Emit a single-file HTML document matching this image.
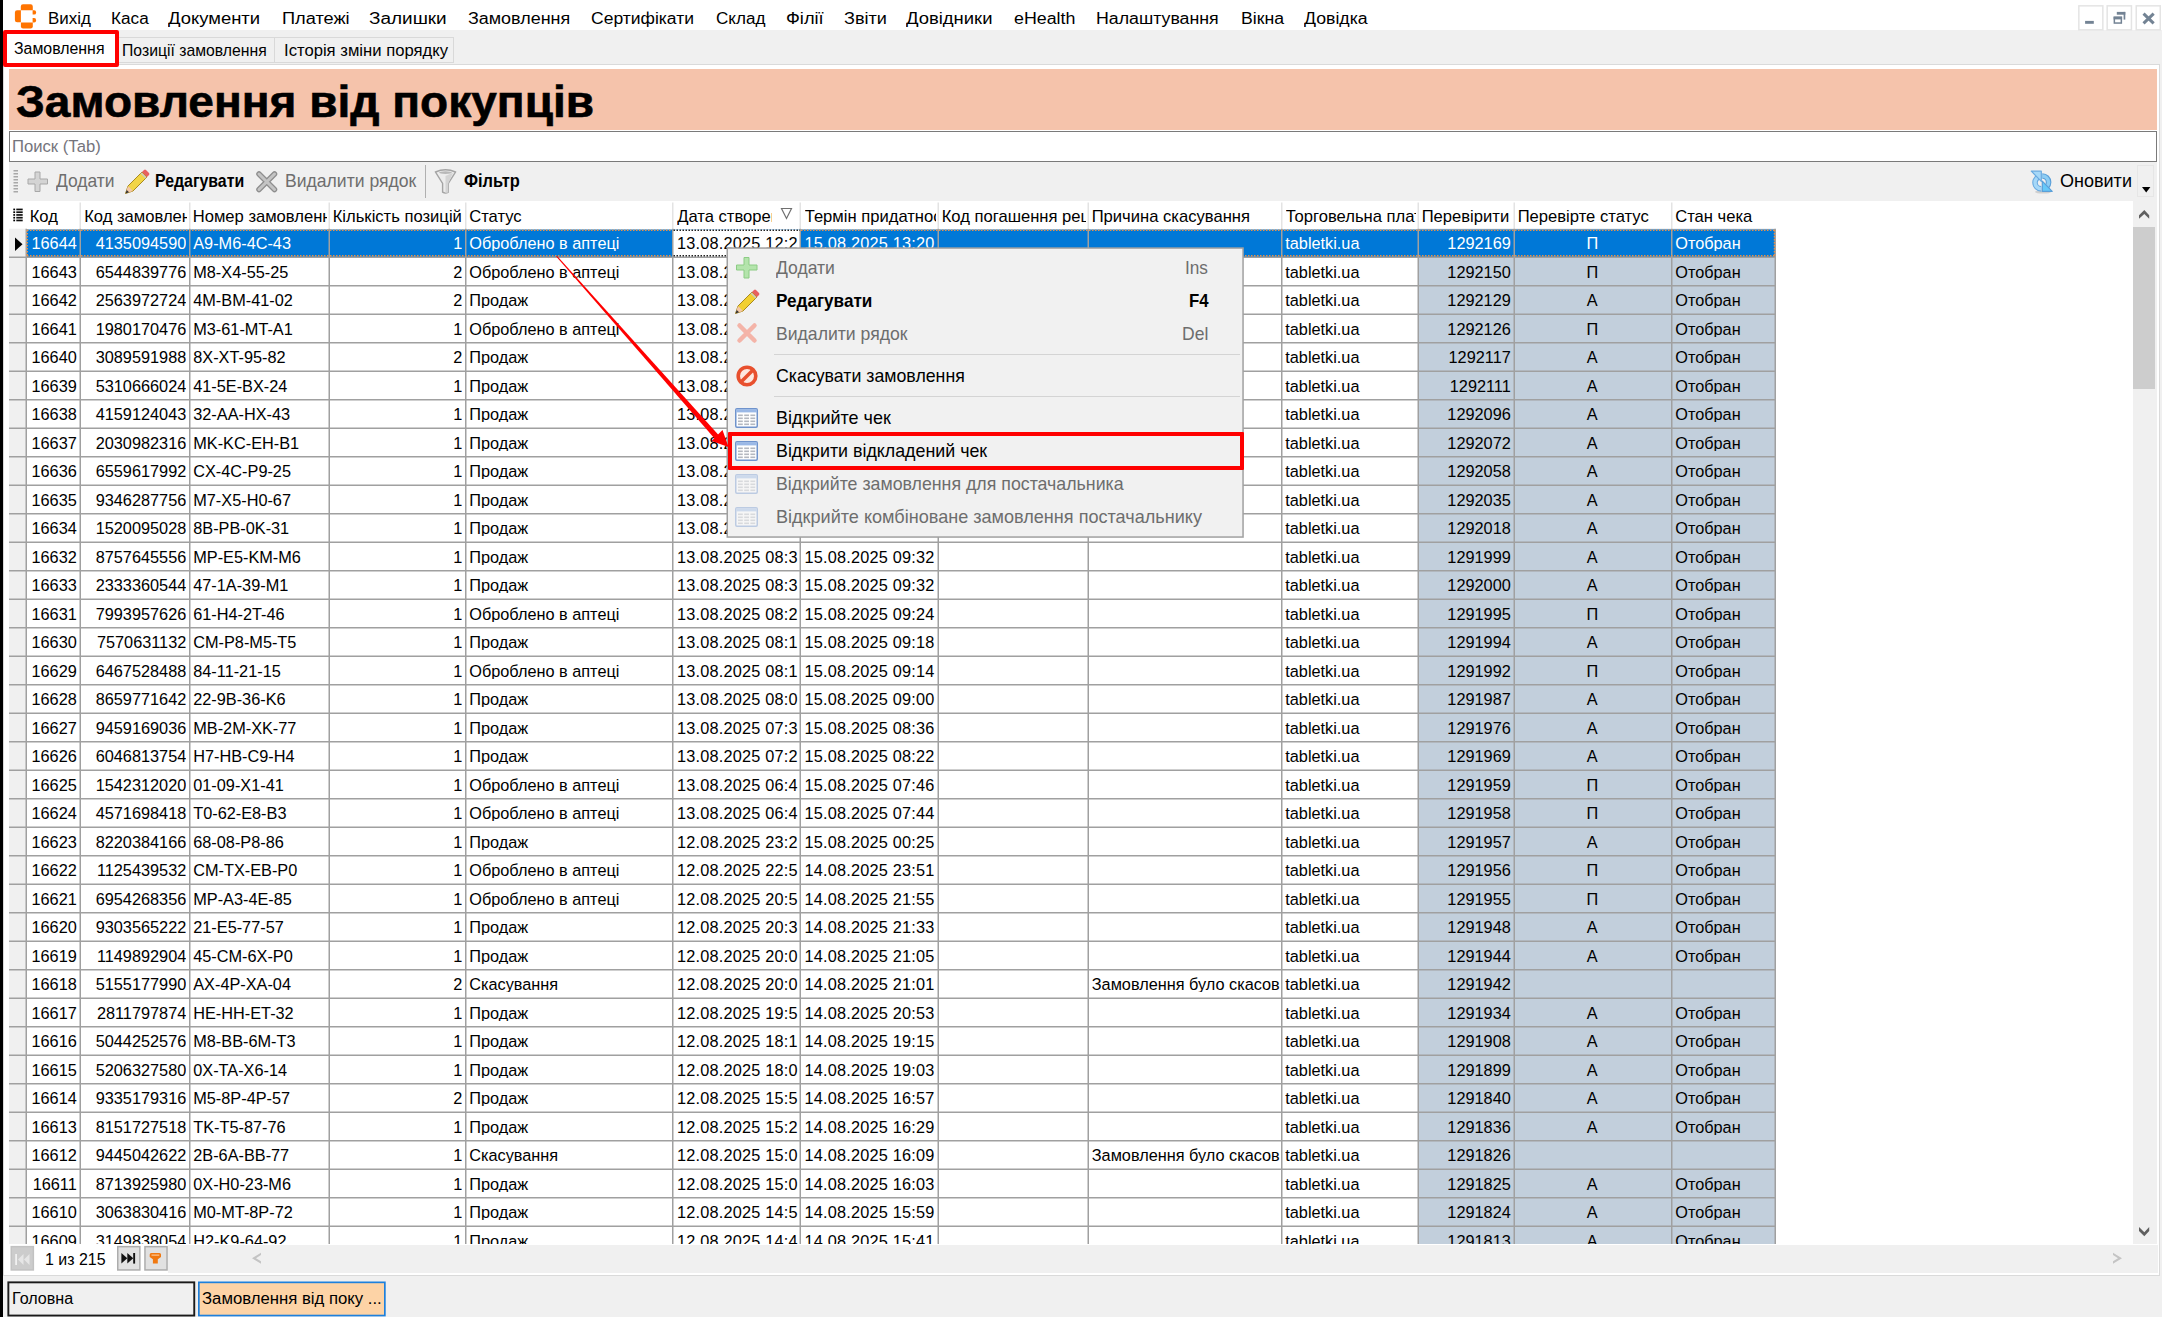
<!DOCTYPE html><html><head><meta charset="utf-8"><title>Замовлення від покупців</title><style>
*{margin:0;padding:0;box-sizing:border-box}
html,body{width:2162px;height:1317px;overflow:hidden;background:#f0f0f0;font-family:"Liberation Sans",sans-serif}
.t{position:absolute;line-height:1;white-space:nowrap}
.b{position:absolute}
svg{position:absolute;overflow:visible}
</style></head><body>
<div class="b" style="left:0px;top:0px;width:3px;height:1317px;background:#000"></div>
<div class="b" style="left:3px;top:0px;width:2159px;height:30px;background:#fff"></div>
<svg style="left:14px;top:4px" width="24" height="26" viewBox="0 0 24 26"><path d="M9 0.2h7.6a2.2 2.2 0 0 1 2.2 2.2v3.9h-12v-3.9a2.2 2.2 0 0 1 2.2-2.2z" fill="#ff7400"/><path d="M3.1 6.2h3.8v12h-3.8a2.2 2.2 0 0 1-2.2-2.2v-7.6a2.2 2.2 0 0 1 2.2-2.2z" fill="#ff7400"/><path d="M6.9 18.6h11.9v3.7a2.2 2.2 0 0 1-2.2 2.2h-7.5a2.2 2.2 0 0 1-2.2-2.2z" fill="#ff7400"/><path d="M18.6 6.2h1.6a1.9 1.9 0 0 1 1.9 1.9v0.6a1.9 1.9 0 0 1-1.9 1.9h-1.6z" fill="#ff7400"/><path d="M18.6 14h1.6a1.9 1.9 0 0 1 1.9 1.9v0.6a1.9 1.9 0 0 1-1.9 1.9h-1.6z" fill="#ff7400"/></svg>
<div class="t" style="left:47.6px;top:9.76px;font-size:17.3px;color:#000;transform:scaleX(0.9799);transform-origin:0 0;">Вихід</div>
<div class="t" style="left:110.69999999999999px;top:9.76px;font-size:17.3px;color:#000;transform:scaleX(0.9934);transform-origin:0 0;">Каса</div>
<div class="t" style="left:168.4px;top:9.76px;font-size:17.3px;color:#000;transform:scaleX(1.0667);transform-origin:0 0;">Документи</div>
<div class="t" style="left:281.6px;top:9.76px;font-size:17.3px;color:#000;transform:scaleX(1.0527);transform-origin:0 0;">Платежі</div>
<div class="t" style="left:369.1px;top:9.76px;font-size:17.3px;color:#000;transform:scaleX(1.0966);transform-origin:0 0;">Залишки</div>
<div class="t" style="left:467.6px;top:9.76px;font-size:17.3px;color:#000;transform:scaleX(1.0373);transform-origin:0 0;">Замовлення</div>
<div class="t" style="left:590.6px;top:9.76px;font-size:17.3px;color:#000;transform:scaleX(1.0130);transform-origin:0 0;">Сертифікати</div>
<div class="t" style="left:715.5px;top:9.76px;font-size:17.3px;color:#000;transform:scaleX(0.9873);transform-origin:0 0;">Склад</div>
<div class="t" style="left:785.8000000000001px;top:9.76px;font-size:17.3px;color:#000;transform:scaleX(1.0551);transform-origin:0 0;">Філії</div>
<div class="t" style="left:843.5px;top:9.76px;font-size:17.3px;color:#000;transform:scaleX(1.0470);transform-origin:0 0;">Звіти</div>
<div class="t" style="left:906.4px;top:9.76px;font-size:17.3px;color:#000;transform:scaleX(1.0673);transform-origin:0 0;">Довідники</div>
<div class="t" style="left:1013.7px;top:9.76px;font-size:17.3px;color:#000;transform:scaleX(1.0312);transform-origin:0 0;">eHealth</div>
<div class="t" style="left:1096.1px;top:9.76px;font-size:17.3px;color:#000;transform:scaleX(1.0275);transform-origin:0 0;">Налаштування</div>
<div class="t" style="left:1240.6px;top:9.76px;font-size:17.3px;color:#000;transform:scaleX(1.0222);transform-origin:0 0;">Вікна</div>
<div class="t" style="left:1304.1px;top:9.76px;font-size:17.3px;color:#000;transform:scaleX(1.0234);transform-origin:0 0;">Довідка</div>
<svg style="left:0;top:0" width="2162" height="40"><rect x="2078.85" y="5.85" width="24.0" height="24" fill="#fff" stroke="#e4e4e4" stroke-width="1.5"/><rect x="2107.15" y="5.85" width="24.299999999999727" height="24" fill="#fff" stroke="#e4e4e4" stroke-width="1.5"/><rect x="2136.25" y="5.85" width="24.0" height="24" fill="#fff" stroke="#e4e4e4" stroke-width="1.5"/><rect x="2085.1" y="20.9" width="8.7" height="2.9" fill="#738394"/><rect x="2114.35" y="17.35" width="7" height="5.7" fill="none" stroke="#738394" stroke-width="1.5"/><rect x="2113.6" y="16.6" width="8.5" height="2.8" fill="#738394"/><rect x="2116.8" y="11.9" width="8.5" height="2.8" fill="#738394"/><rect x="2123.6" y="11.9" width="1.7" height="7.7" fill="#738394"/><path d="M2144.6 14.6L2152.6 22.4M2152.6 14.6L2144.6 22.4" stroke="#738394" stroke-width="3" stroke-linecap="square"/></svg>
<div class="b" style="left:3px;top:64px;width:2157px;height:1212px;background:#fff;border:1px solid #dadada"></div>
<div class="b" style="left:118px;top:37px;width:157px;height:26px;background:#f0f0f0;border:1px solid #d9d9d9"></div>
<div class="b" style="left:274px;top:37px;width:180px;height:26px;background:#f0f0f0;border:1px solid #d9d9d9"></div>
<div class="b" style="left:7px;top:33px;width:109px;height:31px;background:#fff"></div>
<div class="t" style="left:14.2px;top:40.96px;font-size:16px;color:#000;transform:scaleX(0.9925);transform-origin:0 0;">Замовлення</div>
<div class="t" style="left:121.8px;top:43.05px;font-size:16.6px;color:#000;transform:scaleX(0.9494);transform-origin:0 0;">Позиції замовлення</div>
<div class="t" style="left:283.5px;top:43.05px;font-size:16.6px;color:#000;transform:scaleX(1.0035);transform-origin:0 0;">Історія зміни порядку</div>
<div class="b" style="left:3px;top:30px;width:116px;height:37px;border:4px solid #ff0000;border-radius:2px"></div>
<div class="b" style="left:9px;top:69px;width:2148px;height:61px;background:#f5c3ab"></div>
<div class="t" style="left:15.5px;top:80.15px;font-size:44px;color:#000;font-weight:bold;transform:scaleX(1.0462);transform-origin:0 0;-webkit-text-stroke:0.6px #000;">Замовлення від покупців</div>
<div class="b" style="left:9px;top:131px;width:2148px;height:31px;background:#fff;border:1px solid #7a7a7a"></div>
<div class="t" style="left:12.2px;top:138.20px;font-size:16.3px;color:#74747c;transform:scaleX(1.0232);transform-origin:0 0;">Поиск (Tab)</div>
<div class="b" style="left:9px;top:162px;width:2148px;height:39px;background:#f0f0f0"></div>
<svg style="left:13px;top:169px" width="6" height="24"><rect x="0.5" y="1" width="4.5" height="1.5" fill="#a8a8a8"/><rect x="0.5" y="4" width="4.5" height="1.5" fill="#a8a8a8"/><rect x="0.5" y="7" width="4.5" height="1.5" fill="#a8a8a8"/><rect x="0.5" y="10" width="4.5" height="1.5" fill="#a8a8a8"/><rect x="0.5" y="13" width="4.5" height="1.5" fill="#a8a8a8"/><rect x="0.5" y="16" width="4.5" height="1.5" fill="#a8a8a8"/><rect x="0.5" y="19" width="4.5" height="1.5" fill="#a8a8a8"/><rect x="0.5" y="22" width="4.5" height="1.5" fill="#a8a8a8"/></svg>
<svg style="left:27px;top:171px" width="22" height="22"><path d="M8 1h5v7h7.5v5h-7.5v7.5h-5v-7.5h-7v-5h7z" fill="#d4d4d4" stroke="#a8a8a8" stroke-width="1"/></svg>
<div class="t" style="left:55.5px;top:172.09px;font-size:18.2px;color:#6e6e6e;transform:scaleX(0.9598);transform-origin:0 0;">Додати</div>
<svg style="left:124px;top:169px" width="26" height="26"><path d="M1.5 24.5l2.5-7.5L18 3l5 5L9 22z" fill="#f2d545" stroke="#a88a20" stroke-width="1"/><path d="M18 3l2-2a1.5 1.5 0 0 1 2 0l3 3a1.5 1.5 0 0 1 0 2l-2 2z" fill="#e86060"/><path d="M17 4l5 5" stroke="#c8c8c8" stroke-width="1.5"/><path d="M1.5 24.5l2.5-7.5 5 5z" fill="#f4c8a8"/><path d="M1.5 24.5l1.2-3.6 2.4 2.4z" fill="#333"/></svg>
<div class="t" style="left:154.6px;top:171.99px;font-size:18.2px;color:#000;font-weight:bold;transform:scaleX(0.8719);transform-origin:0 0;">Редагувати</div>
<svg style="left:256px;top:171px" width="22" height="22"><path d="M3 3l15.5 15.5M18.5 3L3 18.5" stroke="#8e8e8e" stroke-width="5.5" stroke-linecap="round"/><path d="M3 3l15.5 15.5M18.5 3L3 18.5" stroke="#c4c4c4" stroke-width="3" stroke-linecap="round"/></svg>
<div class="t" style="left:284.8px;top:171.99px;font-size:18.2px;color:#6e6e6e;transform:scaleX(0.9671);transform-origin:0 0;">Видалити рядок</div>
<div class="b" style="left:424.5px;top:165px;width:1.5px;height:33px;background:#b0b0b0"></div>
<svg style="left:0;top:0" width="2162" height="260"><path d="M435.5 172Q445.5 167.5 455.5 172L448.3 183.5V192.2Q445.5 194 442.6 192.2V183.5Z" fill="#ececec" stroke="#a4a4a4" stroke-width="1.4"/><path d="M445.5 176L453 172.8L448.3 183.5V192.5L445.5 193z" fill="#d4d4d4"/><ellipse cx="445.5" cy="172.6" rx="6.5" ry="1.3" fill="#b8b8b8"/></svg>
<div class="t" style="left:463.5px;top:171.99px;font-size:18.2px;color:#000;font-weight:bold;transform:scaleX(0.9028);transform-origin:0 0;">Фільтр</div>
<svg style="left:0;top:0" width="2162" height="260"><ellipse cx="2043" cy="192" rx="8" ry="1.6" fill="#cfcfcf"/><path d="M2041.3 176.3A6.3 6.3 0 0 0 2041.3 188.9" fill="none" stroke="#6aaae0" stroke-width="5.6"/><path d="M2041.3 176.3A6.3 6.3 0 0 0 2041.3 188.9" fill="none" stroke="#a6d8f8" stroke-width="3.4"/><path d="M2031.3 171.2H2041.3V181.4Z" fill="#a6d8f8" stroke="#6aaae0" stroke-width="1.2" stroke-linejoin="round"/><path d="M2042.3 176A6.3 6.3 0 0 1 2042.3 188.6" fill="none" stroke="#5b9fd8" stroke-width="5.6"/><path d="M2042.3 176A6.3 6.3 0 0 1 2042.3 188.6" fill="none" stroke="#8ccdf4" stroke-width="3.4"/><path d="M2052.2 191.4H2042.3V181.2Z" fill="#66c8f8" stroke="#5b9fd8" stroke-width="1.2" stroke-linejoin="round"/></svg>
<div class="t" style="left:2059.8px;top:171.99px;font-size:18.2px;color:#000;transform:scaleX(0.9907);transform-origin:0 0;">Оновити</div>
<div class="b" style="left:2137.2px;top:165px;width:16.5px;height:32px;border:1px solid #e6e6e6"></div>
<svg style="left:2141.8px;top:187px" width="10" height="7"><path d="M0 0h8.4l-4.2 5.5z" fill="#000"/></svg>
<div style="position:absolute;left:9px;top:201px;width:2124px;height:1043px;overflow:hidden;background:#fff">
<div style="position:absolute;left:-9px;top:-201px;width:2162px;height:1317px">
<svg style="left:0;top:0" width="2162" height="1317"><rect x="9" y="228.75" width="17.25" height="1100" fill="#f0f0f0"/><rect x="1418.25" y="228.75" width="357" height="1100" fill="#c2cfdc"/><rect x="26.25" y="229.5" width="1749" height="27.75" fill="#0078d7"/><rect x="672.75" y="229.5" width="127.5" height="27.75" fill="#fff"/><rect x="79.5" y="202.5" width="1.5" height="26.25" fill="#e3e3e3"/><rect x="189.0" y="202.5" width="1.5" height="26.25" fill="#e3e3e3"/><rect x="328.5" y="202.5" width="1.5" height="26.25" fill="#e3e3e3"/><rect x="465.0" y="202.5" width="1.5" height="26.25" fill="#e3e3e3"/><rect x="672.0" y="202.5" width="1.5" height="26.25" fill="#e3e3e3"/><rect x="799.5" y="202.5" width="1.5" height="26.25" fill="#e3e3e3"/><rect x="937.5" y="202.5" width="1.5" height="26.25" fill="#e3e3e3"/><rect x="1087.5" y="202.5" width="1.5" height="26.25" fill="#e3e3e3"/><rect x="1281.0" y="202.5" width="1.5" height="26.25" fill="#e3e3e3"/><rect x="1417.5" y="202.5" width="1.5" height="26.25" fill="#e3e3e3"/><rect x="1513.5" y="202.5" width="1.5" height="26.25" fill="#e3e3e3"/><rect x="1671.0" y="202.5" width="1.5" height="26.25" fill="#e3e3e3"/><rect x="25.5" y="228.75" width="1.5" height="1100" fill="#a0a0a0"/><rect x="79.5" y="228.75" width="1.5" height="1100" fill="#a0a0a0"/><rect x="189.0" y="228.75" width="1.5" height="1100" fill="#a0a0a0"/><rect x="328.5" y="228.75" width="1.5" height="1100" fill="#a0a0a0"/><rect x="465.0" y="228.75" width="1.5" height="1100" fill="#a0a0a0"/><rect x="672.0" y="228.75" width="1.5" height="1100" fill="#a0a0a0"/><rect x="799.5" y="228.75" width="1.5" height="1100" fill="#a0a0a0"/><rect x="937.5" y="228.75" width="1.5" height="1100" fill="#a0a0a0"/><rect x="1087.5" y="228.75" width="1.5" height="1100" fill="#a0a0a0"/><rect x="1281.0" y="228.75" width="1.5" height="1100" fill="#a0a0a0"/><rect x="1417.5" y="228.75" width="1.5" height="1100" fill="#a0a0a0"/><rect x="1513.5" y="228.75" width="1.5" height="1100" fill="#a0a0a0"/><rect x="1671.0" y="228.75" width="1.5" height="1100" fill="#a0a0a0"/><rect x="1774.5" y="228.75" width="1.5" height="1100" fill="#a0a0a0"/><rect x="9" y="256.5" width="1767" height="1.5" fill="#a0a0a0"/><rect x="9" y="285.0" width="1767" height="1.5" fill="#a0a0a0"/><rect x="9" y="313.5" width="1767" height="1.5" fill="#a0a0a0"/><rect x="9" y="342.0" width="1767" height="1.5" fill="#a0a0a0"/><rect x="9" y="370.5" width="1767" height="1.5" fill="#a0a0a0"/><rect x="9" y="399.0" width="1767" height="1.5" fill="#a0a0a0"/><rect x="9" y="427.5" width="1767" height="1.5" fill="#a0a0a0"/><rect x="9" y="456.0" width="1767" height="1.5" fill="#a0a0a0"/><rect x="9" y="484.5" width="1767" height="1.5" fill="#a0a0a0"/><rect x="9" y="513.0" width="1767" height="1.5" fill="#a0a0a0"/><rect x="9" y="541.5" width="1767" height="1.5" fill="#a0a0a0"/><rect x="9" y="570.0" width="1767" height="1.5" fill="#a0a0a0"/><rect x="9" y="598.5" width="1767" height="1.5" fill="#a0a0a0"/><rect x="9" y="627.0" width="1767" height="1.5" fill="#a0a0a0"/><rect x="9" y="655.5" width="1767" height="1.5" fill="#a0a0a0"/><rect x="9" y="684.0" width="1767" height="1.5" fill="#a0a0a0"/><rect x="9" y="712.5" width="1767" height="1.5" fill="#a0a0a0"/><rect x="9" y="741.0" width="1767" height="1.5" fill="#a0a0a0"/><rect x="9" y="769.5" width="1767" height="1.5" fill="#a0a0a0"/><rect x="9" y="798.0" width="1767" height="1.5" fill="#a0a0a0"/><rect x="9" y="826.5" width="1767" height="1.5" fill="#a0a0a0"/><rect x="9" y="855.0" width="1767" height="1.5" fill="#a0a0a0"/><rect x="9" y="883.5" width="1767" height="1.5" fill="#a0a0a0"/><rect x="9" y="912.0" width="1767" height="1.5" fill="#a0a0a0"/><rect x="9" y="940.5" width="1767" height="1.5" fill="#a0a0a0"/><rect x="9" y="969.0" width="1767" height="1.5" fill="#a0a0a0"/><rect x="9" y="997.5" width="1767" height="1.5" fill="#a0a0a0"/><rect x="9" y="1026.0" width="1767" height="1.5" fill="#a0a0a0"/><rect x="9" y="1054.5" width="1767" height="1.5" fill="#a0a0a0"/><rect x="9" y="1083.0" width="1767" height="1.5" fill="#a0a0a0"/><rect x="9" y="1111.5" width="1767" height="1.5" fill="#a0a0a0"/><rect x="9" y="1140.0" width="1767" height="1.5" fill="#a0a0a0"/><rect x="9" y="1168.5" width="1767" height="1.5" fill="#a0a0a0"/><rect x="9" y="1197.0" width="1767" height="1.5" fill="#a0a0a0"/><rect x="9" y="1225.5" width="1767" height="1.5" fill="#a0a0a0"/><rect x="9" y="1254.0" width="1767" height="1.5" fill="#a0a0a0"/><line x1="27" y1="230.25" x2="672" y2="230.25" stroke="#e89048" stroke-width="1.5" stroke-dasharray="1.5 1.5"/><line x1="27" y1="255.75" x2="672" y2="255.75" stroke="#e89048" stroke-width="1.5" stroke-dasharray="1.5 1.5"/><line x1="801" y1="230.25" x2="1775" y2="230.25" stroke="#e89048" stroke-width="1.5" stroke-dasharray="1.5 1.5"/><line x1="801" y1="255.75" x2="1775" y2="255.75" stroke="#e89048" stroke-width="1.5" stroke-dasharray="1.5 1.5"/><line x1="27.25" y1="230" x2="27.25" y2="256" stroke="#e89048" stroke-width="1.5" stroke-dasharray="1.5 1.5"/><line x1="1774.5" y1="230" x2="1774.5" y2="256" stroke="#e89048" stroke-width="1.5" stroke-dasharray="1.5 1.5"/><line x1="673.5" y1="230.25" x2="800" y2="230.25" stroke="#222" stroke-width="1.5" stroke-dasharray="1.5 1.5"/><line x1="673.5" y1="255.75" x2="800" y2="255.75" stroke="#222" stroke-width="1.5" stroke-dasharray="1.5 1.5"/><path d="M15 237.5L22.5 244.25L15 251z" fill="#000"/><rect x="13.3" y="208.60" width="1.8" height="1.7" fill="#000"/><rect x="16.3" y="208.60" width="6.4" height="1.7" fill="#111"/><rect x="13.3" y="211.35" width="1.8" height="1.7" fill="#000"/><rect x="16.3" y="211.35" width="6.4" height="1.7" fill="#111"/><rect x="13.3" y="214.10" width="1.8" height="1.7" fill="#000"/><rect x="16.3" y="214.10" width="6.4" height="1.7" fill="#111"/><rect x="13.3" y="216.85" width="1.8" height="1.7" fill="#000"/><rect x="16.3" y="216.85" width="6.4" height="1.7" fill="#111"/><rect x="13.3" y="219.60" width="1.8" height="1.7" fill="#000"/><rect x="16.3" y="219.60" width="6.4" height="1.7" fill="#111"/><path d="M781.5 208.5h10l-5 10z" fill="none" stroke="#707070" stroke-width="1.2"/></svg>
<div class="t" style="left:29.7px;top:208.75px;font-size:16.6px;width:48.25px;overflow:hidden">Код</div>
<div class="t" style="left:84.2px;top:208.75px;font-size:16.6px;width:103.25px;overflow:hidden">Код замовлення</div>
<div class="t" style="left:192.7px;top:208.75px;font-size:16.6px;width:134.25px;overflow:hidden">Номер замовлення</div>
<div class="t" style="left:332.7px;top:208.75px;font-size:16.6px;width:130.75px;overflow:hidden">Кількість позицій</div>
<div class="t" style="left:469.2px;top:208.75px;font-size:16.6px;width:201.25px;overflow:hidden">Статус</div>
<div class="t" style="left:677.2px;top:208.75px;font-size:16.6px;width:94.50px;overflow:hidden">Дата створення</div>
<div class="t" style="left:804.7px;top:208.75px;font-size:16.6px;width:131.25px;overflow:hidden">Термін придатності</div>
<div class="t" style="left:941.7px;top:208.75px;font-size:16.6px;width:144.25px;overflow:hidden">Код погашення рецепту</div>
<div class="t" style="left:1091.7px;top:208.75px;font-size:16.6px;width:187.75px;overflow:hidden">Причина скасування</div>
<div class="t" style="left:1285.7px;top:208.75px;font-size:16.6px;width:130.25px;overflow:hidden">Торговельна платформа</div>
<div class="t" style="left:1421.7px;top:208.75px;font-size:16.6px;width:90.25px;overflow:hidden">Перевірити</div>
<div class="t" style="left:1517.7px;top:208.75px;font-size:16.6px;width:151.75px;overflow:hidden">Перевірте статус</div>
<div class="t" style="left:1675.2px;top:208.75px;font-size:16.6px;width:97.75px;overflow:hidden">Стан чека</div>
<div class="t" style="left:26.25px;width:50.50px;text-align:right;top:235.10px;font-size:16.3px;color:#fff;overflow:hidden">16644</div>
<div class="t" style="left:80.25px;width:106.00px;text-align:right;top:235.10px;font-size:16.3px;color:#fff;overflow:hidden">4135094590</div>
<div class="t" style="left:193.25px;width:135.00px;top:235.10px;font-size:16.3px;color:#fff;overflow:hidden">A9-M6-4C-43</div>
<div class="t" style="left:329.25px;width:133.00px;text-align:right;top:235.10px;font-size:16.3px;color:#fff;overflow:hidden">1</div>
<div class="t" style="left:469.25px;width:202.50px;top:235.10px;font-size:16.3px;color:#fff;overflow:hidden">Оброблено в аптеці</div>
<div class="t" style="left:676.95px;width:123.00px;letter-spacing:0.2px;top:235.10px;font-size:16.3px;color:#000;overflow:hidden">13.08.2025 12:2</div>
<div class="t" style="left:804.45px;width:133.50px;letter-spacing:0.2px;top:235.10px;font-size:16.3px;color:#fff;overflow:hidden">15.08.2025 13:20</div>
<div class="t" style="left:1285.25px;width:132.00px;top:235.10px;font-size:16.3px;color:#fff;overflow:hidden">tabletki.ua</div>
<div class="t" style="left:1418.25px;width:92.50px;text-align:right;top:235.10px;font-size:16.3px;color:#fff;overflow:hidden">1292169</div>
<div class="t" style="left:1514.25px;width:156.00px;text-align:center;top:235.10px;font-size:16.3px;color:#fff;overflow:hidden">П</div>
<div class="t" style="left:1675.25px;width:99.00px;top:235.10px;font-size:16.3px;color:#fff;overflow:hidden">Отобран</div>
<div class="t" style="left:26.25px;width:50.50px;text-align:right;top:263.60px;font-size:16.3px;color:#000;overflow:hidden">16643</div>
<div class="t" style="left:80.25px;width:106.00px;text-align:right;top:263.60px;font-size:16.3px;color:#000;overflow:hidden">6544839776</div>
<div class="t" style="left:193.25px;width:135.00px;top:263.60px;font-size:16.3px;color:#000;overflow:hidden">M8-X4-55-25</div>
<div class="t" style="left:329.25px;width:133.00px;text-align:right;top:263.60px;font-size:16.3px;color:#000;overflow:hidden">2</div>
<div class="t" style="left:469.25px;width:202.50px;top:263.60px;font-size:16.3px;color:#000;overflow:hidden">Оброблено в аптеці</div>
<div class="t" style="left:676.95px;width:123.00px;letter-spacing:0.2px;top:263.60px;font-size:16.3px;color:#000;overflow:hidden">13.08.2025 12:1</div>
<div class="t" style="left:804.45px;width:133.50px;letter-spacing:0.2px;top:263.60px;font-size:16.3px;color:#000;overflow:hidden">15.08.2025 13:10</div>
<div class="t" style="left:1285.25px;width:132.00px;top:263.60px;font-size:16.3px;color:#000;overflow:hidden">tabletki.ua</div>
<div class="t" style="left:1418.25px;width:92.50px;text-align:right;top:263.60px;font-size:16.3px;color:#000;overflow:hidden">1292150</div>
<div class="t" style="left:1514.25px;width:156.00px;text-align:center;top:263.60px;font-size:16.3px;color:#000;overflow:hidden">П</div>
<div class="t" style="left:1675.25px;width:99.00px;top:263.60px;font-size:16.3px;color:#000;overflow:hidden">Отобран</div>
<div class="t" style="left:26.25px;width:50.50px;text-align:right;top:292.10px;font-size:16.3px;color:#000;overflow:hidden">16642</div>
<div class="t" style="left:80.25px;width:106.00px;text-align:right;top:292.10px;font-size:16.3px;color:#000;overflow:hidden">2563972724</div>
<div class="t" style="left:193.25px;width:135.00px;top:292.10px;font-size:16.3px;color:#000;overflow:hidden">4M-BM-41-02</div>
<div class="t" style="left:329.25px;width:133.00px;text-align:right;top:292.10px;font-size:16.3px;color:#000;overflow:hidden">2</div>
<div class="t" style="left:469.25px;width:202.50px;top:292.10px;font-size:16.3px;color:#000;overflow:hidden">Продаж</div>
<div class="t" style="left:676.95px;width:123.00px;letter-spacing:0.2px;top:292.10px;font-size:16.3px;color:#000;overflow:hidden">13.08.2025 11:5</div>
<div class="t" style="left:804.45px;width:133.50px;letter-spacing:0.2px;top:292.10px;font-size:16.3px;color:#000;overflow:hidden">15.08.2025 12:50</div>
<div class="t" style="left:1285.25px;width:132.00px;top:292.10px;font-size:16.3px;color:#000;overflow:hidden">tabletki.ua</div>
<div class="t" style="left:1418.25px;width:92.50px;text-align:right;top:292.10px;font-size:16.3px;color:#000;overflow:hidden">1292129</div>
<div class="t" style="left:1514.25px;width:156.00px;text-align:center;top:292.10px;font-size:16.3px;color:#000;overflow:hidden">А</div>
<div class="t" style="left:1675.25px;width:99.00px;top:292.10px;font-size:16.3px;color:#000;overflow:hidden">Отобран</div>
<div class="t" style="left:26.25px;width:50.50px;text-align:right;top:320.60px;font-size:16.3px;color:#000;overflow:hidden">16641</div>
<div class="t" style="left:80.25px;width:106.00px;text-align:right;top:320.60px;font-size:16.3px;color:#000;overflow:hidden">1980170476</div>
<div class="t" style="left:193.25px;width:135.00px;top:320.60px;font-size:16.3px;color:#000;overflow:hidden">M3-61-MT-A1</div>
<div class="t" style="left:329.25px;width:133.00px;text-align:right;top:320.60px;font-size:16.3px;color:#000;overflow:hidden">1</div>
<div class="t" style="left:469.25px;width:202.50px;top:320.60px;font-size:16.3px;color:#000;overflow:hidden">Оброблено в аптеці</div>
<div class="t" style="left:676.95px;width:123.00px;letter-spacing:0.2px;top:320.60px;font-size:16.3px;color:#000;overflow:hidden">13.08.2025 11:4</div>
<div class="t" style="left:804.45px;width:133.50px;letter-spacing:0.2px;top:320.60px;font-size:16.3px;color:#000;overflow:hidden">15.08.2025 12:45</div>
<div class="t" style="left:1285.25px;width:132.00px;top:320.60px;font-size:16.3px;color:#000;overflow:hidden">tabletki.ua</div>
<div class="t" style="left:1418.25px;width:92.50px;text-align:right;top:320.60px;font-size:16.3px;color:#000;overflow:hidden">1292126</div>
<div class="t" style="left:1514.25px;width:156.00px;text-align:center;top:320.60px;font-size:16.3px;color:#000;overflow:hidden">П</div>
<div class="t" style="left:1675.25px;width:99.00px;top:320.60px;font-size:16.3px;color:#000;overflow:hidden">Отобран</div>
<div class="t" style="left:26.25px;width:50.50px;text-align:right;top:349.10px;font-size:16.3px;color:#000;overflow:hidden">16640</div>
<div class="t" style="left:80.25px;width:106.00px;text-align:right;top:349.10px;font-size:16.3px;color:#000;overflow:hidden">3089591988</div>
<div class="t" style="left:193.25px;width:135.00px;top:349.10px;font-size:16.3px;color:#000;overflow:hidden">8X-XT-95-82</div>
<div class="t" style="left:329.25px;width:133.00px;text-align:right;top:349.10px;font-size:16.3px;color:#000;overflow:hidden">2</div>
<div class="t" style="left:469.25px;width:202.50px;top:349.10px;font-size:16.3px;color:#000;overflow:hidden">Продаж</div>
<div class="t" style="left:676.95px;width:123.00px;letter-spacing:0.2px;top:349.10px;font-size:16.3px;color:#000;overflow:hidden">13.08.2025 11:3</div>
<div class="t" style="left:804.45px;width:133.50px;letter-spacing:0.2px;top:349.10px;font-size:16.3px;color:#000;overflow:hidden">15.08.2025 12:35</div>
<div class="t" style="left:1285.25px;width:132.00px;top:349.10px;font-size:16.3px;color:#000;overflow:hidden">tabletki.ua</div>
<div class="t" style="left:1418.25px;width:92.50px;text-align:right;top:349.10px;font-size:16.3px;color:#000;overflow:hidden">1292117</div>
<div class="t" style="left:1514.25px;width:156.00px;text-align:center;top:349.10px;font-size:16.3px;color:#000;overflow:hidden">А</div>
<div class="t" style="left:1675.25px;width:99.00px;top:349.10px;font-size:16.3px;color:#000;overflow:hidden">Отобран</div>
<div class="t" style="left:26.25px;width:50.50px;text-align:right;top:377.60px;font-size:16.3px;color:#000;overflow:hidden">16639</div>
<div class="t" style="left:80.25px;width:106.00px;text-align:right;top:377.60px;font-size:16.3px;color:#000;overflow:hidden">5310666024</div>
<div class="t" style="left:193.25px;width:135.00px;top:377.60px;font-size:16.3px;color:#000;overflow:hidden">41-5E-BX-24</div>
<div class="t" style="left:329.25px;width:133.00px;text-align:right;top:377.60px;font-size:16.3px;color:#000;overflow:hidden">1</div>
<div class="t" style="left:469.25px;width:202.50px;top:377.60px;font-size:16.3px;color:#000;overflow:hidden">Продаж</div>
<div class="t" style="left:676.95px;width:123.00px;letter-spacing:0.2px;top:377.60px;font-size:16.3px;color:#000;overflow:hidden">13.08.2025 11:2</div>
<div class="t" style="left:804.45px;width:133.50px;letter-spacing:0.2px;top:377.60px;font-size:16.3px;color:#000;overflow:hidden">15.08.2025 12:25</div>
<div class="t" style="left:1285.25px;width:132.00px;top:377.60px;font-size:16.3px;color:#000;overflow:hidden">tabletki.ua</div>
<div class="t" style="left:1418.25px;width:92.50px;text-align:right;top:377.60px;font-size:16.3px;color:#000;overflow:hidden">1292111</div>
<div class="t" style="left:1514.25px;width:156.00px;text-align:center;top:377.60px;font-size:16.3px;color:#000;overflow:hidden">А</div>
<div class="t" style="left:1675.25px;width:99.00px;top:377.60px;font-size:16.3px;color:#000;overflow:hidden">Отобран</div>
<div class="t" style="left:26.25px;width:50.50px;text-align:right;top:406.10px;font-size:16.3px;color:#000;overflow:hidden">16638</div>
<div class="t" style="left:80.25px;width:106.00px;text-align:right;top:406.10px;font-size:16.3px;color:#000;overflow:hidden">4159124043</div>
<div class="t" style="left:193.25px;width:135.00px;top:406.10px;font-size:16.3px;color:#000;overflow:hidden">32-AA-HX-43</div>
<div class="t" style="left:329.25px;width:133.00px;text-align:right;top:406.10px;font-size:16.3px;color:#000;overflow:hidden">1</div>
<div class="t" style="left:469.25px;width:202.50px;top:406.10px;font-size:16.3px;color:#000;overflow:hidden">Продаж</div>
<div class="t" style="left:676.95px;width:123.00px;letter-spacing:0.2px;top:406.10px;font-size:16.3px;color:#000;overflow:hidden">13.08.2025 10:5</div>
<div class="t" style="left:804.45px;width:133.50px;letter-spacing:0.2px;top:406.10px;font-size:16.3px;color:#000;overflow:hidden">15.08.2025 11:55</div>
<div class="t" style="left:1285.25px;width:132.00px;top:406.10px;font-size:16.3px;color:#000;overflow:hidden">tabletki.ua</div>
<div class="t" style="left:1418.25px;width:92.50px;text-align:right;top:406.10px;font-size:16.3px;color:#000;overflow:hidden">1292096</div>
<div class="t" style="left:1514.25px;width:156.00px;text-align:center;top:406.10px;font-size:16.3px;color:#000;overflow:hidden">А</div>
<div class="t" style="left:1675.25px;width:99.00px;top:406.10px;font-size:16.3px;color:#000;overflow:hidden">Отобран</div>
<div class="t" style="left:26.25px;width:50.50px;text-align:right;top:434.60px;font-size:16.3px;color:#000;overflow:hidden">16637</div>
<div class="t" style="left:80.25px;width:106.00px;text-align:right;top:434.60px;font-size:16.3px;color:#000;overflow:hidden">2030982316</div>
<div class="t" style="left:193.25px;width:135.00px;top:434.60px;font-size:16.3px;color:#000;overflow:hidden">MK-KC-EH-B1</div>
<div class="t" style="left:329.25px;width:133.00px;text-align:right;top:434.60px;font-size:16.3px;color:#000;overflow:hidden">1</div>
<div class="t" style="left:469.25px;width:202.50px;top:434.60px;font-size:16.3px;color:#000;overflow:hidden">Продаж</div>
<div class="t" style="left:676.95px;width:123.00px;letter-spacing:0.2px;top:434.60px;font-size:16.3px;color:#000;overflow:hidden">13.08.2025 10:2</div>
<div class="t" style="left:804.45px;width:133.50px;letter-spacing:0.2px;top:434.60px;font-size:16.3px;color:#000;overflow:hidden">15.08.2025 11:25</div>
<div class="t" style="left:1285.25px;width:132.00px;top:434.60px;font-size:16.3px;color:#000;overflow:hidden">tabletki.ua</div>
<div class="t" style="left:1418.25px;width:92.50px;text-align:right;top:434.60px;font-size:16.3px;color:#000;overflow:hidden">1292072</div>
<div class="t" style="left:1514.25px;width:156.00px;text-align:center;top:434.60px;font-size:16.3px;color:#000;overflow:hidden">А</div>
<div class="t" style="left:1675.25px;width:99.00px;top:434.60px;font-size:16.3px;color:#000;overflow:hidden">Отобран</div>
<div class="t" style="left:26.25px;width:50.50px;text-align:right;top:463.10px;font-size:16.3px;color:#000;overflow:hidden">16636</div>
<div class="t" style="left:80.25px;width:106.00px;text-align:right;top:463.10px;font-size:16.3px;color:#000;overflow:hidden">6559617992</div>
<div class="t" style="left:193.25px;width:135.00px;top:463.10px;font-size:16.3px;color:#000;overflow:hidden">CX-4C-P9-25</div>
<div class="t" style="left:329.25px;width:133.00px;text-align:right;top:463.10px;font-size:16.3px;color:#000;overflow:hidden">1</div>
<div class="t" style="left:469.25px;width:202.50px;top:463.10px;font-size:16.3px;color:#000;overflow:hidden">Продаж</div>
<div class="t" style="left:676.95px;width:123.00px;letter-spacing:0.2px;top:463.10px;font-size:16.3px;color:#000;overflow:hidden">13.08.2025 09:5</div>
<div class="t" style="left:804.45px;width:133.50px;letter-spacing:0.2px;top:463.10px;font-size:16.3px;color:#000;overflow:hidden">15.08.2025 10:55</div>
<div class="t" style="left:1285.25px;width:132.00px;top:463.10px;font-size:16.3px;color:#000;overflow:hidden">tabletki.ua</div>
<div class="t" style="left:1418.25px;width:92.50px;text-align:right;top:463.10px;font-size:16.3px;color:#000;overflow:hidden">1292058</div>
<div class="t" style="left:1514.25px;width:156.00px;text-align:center;top:463.10px;font-size:16.3px;color:#000;overflow:hidden">А</div>
<div class="t" style="left:1675.25px;width:99.00px;top:463.10px;font-size:16.3px;color:#000;overflow:hidden">Отобран</div>
<div class="t" style="left:26.25px;width:50.50px;text-align:right;top:491.60px;font-size:16.3px;color:#000;overflow:hidden">16635</div>
<div class="t" style="left:80.25px;width:106.00px;text-align:right;top:491.60px;font-size:16.3px;color:#000;overflow:hidden">9346287756</div>
<div class="t" style="left:193.25px;width:135.00px;top:491.60px;font-size:16.3px;color:#000;overflow:hidden">M7-X5-H0-67</div>
<div class="t" style="left:329.25px;width:133.00px;text-align:right;top:491.60px;font-size:16.3px;color:#000;overflow:hidden">1</div>
<div class="t" style="left:469.25px;width:202.50px;top:491.60px;font-size:16.3px;color:#000;overflow:hidden">Продаж</div>
<div class="t" style="left:676.95px;width:123.00px;letter-spacing:0.2px;top:491.60px;font-size:16.3px;color:#000;overflow:hidden">13.08.2025 09:3</div>
<div class="t" style="left:804.45px;width:133.50px;letter-spacing:0.2px;top:491.60px;font-size:16.3px;color:#000;overflow:hidden">15.08.2025 10:35</div>
<div class="t" style="left:1285.25px;width:132.00px;top:491.60px;font-size:16.3px;color:#000;overflow:hidden">tabletki.ua</div>
<div class="t" style="left:1418.25px;width:92.50px;text-align:right;top:491.60px;font-size:16.3px;color:#000;overflow:hidden">1292035</div>
<div class="t" style="left:1514.25px;width:156.00px;text-align:center;top:491.60px;font-size:16.3px;color:#000;overflow:hidden">А</div>
<div class="t" style="left:1675.25px;width:99.00px;top:491.60px;font-size:16.3px;color:#000;overflow:hidden">Отобран</div>
<div class="t" style="left:26.25px;width:50.50px;text-align:right;top:520.10px;font-size:16.3px;color:#000;overflow:hidden">16634</div>
<div class="t" style="left:80.25px;width:106.00px;text-align:right;top:520.10px;font-size:16.3px;color:#000;overflow:hidden">1520095028</div>
<div class="t" style="left:193.25px;width:135.00px;top:520.10px;font-size:16.3px;color:#000;overflow:hidden">8B-PB-0K-31</div>
<div class="t" style="left:329.25px;width:133.00px;text-align:right;top:520.10px;font-size:16.3px;color:#000;overflow:hidden">1</div>
<div class="t" style="left:469.25px;width:202.50px;top:520.10px;font-size:16.3px;color:#000;overflow:hidden">Продаж</div>
<div class="t" style="left:676.95px;width:123.00px;letter-spacing:0.2px;top:520.10px;font-size:16.3px;color:#000;overflow:hidden">13.08.2025 09:0</div>
<div class="t" style="left:804.45px;width:133.50px;letter-spacing:0.2px;top:520.10px;font-size:16.3px;color:#000;overflow:hidden">15.08.2025 10:05</div>
<div class="t" style="left:1285.25px;width:132.00px;top:520.10px;font-size:16.3px;color:#000;overflow:hidden">tabletki.ua</div>
<div class="t" style="left:1418.25px;width:92.50px;text-align:right;top:520.10px;font-size:16.3px;color:#000;overflow:hidden">1292018</div>
<div class="t" style="left:1514.25px;width:156.00px;text-align:center;top:520.10px;font-size:16.3px;color:#000;overflow:hidden">А</div>
<div class="t" style="left:1675.25px;width:99.00px;top:520.10px;font-size:16.3px;color:#000;overflow:hidden">Отобран</div>
<div class="t" style="left:26.25px;width:50.50px;text-align:right;top:548.60px;font-size:16.3px;color:#000;overflow:hidden">16632</div>
<div class="t" style="left:80.25px;width:106.00px;text-align:right;top:548.60px;font-size:16.3px;color:#000;overflow:hidden">8757645556</div>
<div class="t" style="left:193.25px;width:135.00px;top:548.60px;font-size:16.3px;color:#000;overflow:hidden">MP-E5-KM-M6</div>
<div class="t" style="left:329.25px;width:133.00px;text-align:right;top:548.60px;font-size:16.3px;color:#000;overflow:hidden">1</div>
<div class="t" style="left:469.25px;width:202.50px;top:548.60px;font-size:16.3px;color:#000;overflow:hidden">Продаж</div>
<div class="t" style="left:676.95px;width:123.00px;letter-spacing:0.2px;top:548.60px;font-size:16.3px;color:#000;overflow:hidden">13.08.2025 08:3</div>
<div class="t" style="left:804.45px;width:133.50px;letter-spacing:0.2px;top:548.60px;font-size:16.3px;color:#000;overflow:hidden">15.08.2025 09:32</div>
<div class="t" style="left:1285.25px;width:132.00px;top:548.60px;font-size:16.3px;color:#000;overflow:hidden">tabletki.ua</div>
<div class="t" style="left:1418.25px;width:92.50px;text-align:right;top:548.60px;font-size:16.3px;color:#000;overflow:hidden">1291999</div>
<div class="t" style="left:1514.25px;width:156.00px;text-align:center;top:548.60px;font-size:16.3px;color:#000;overflow:hidden">А</div>
<div class="t" style="left:1675.25px;width:99.00px;top:548.60px;font-size:16.3px;color:#000;overflow:hidden">Отобран</div>
<div class="t" style="left:26.25px;width:50.50px;text-align:right;top:577.10px;font-size:16.3px;color:#000;overflow:hidden">16633</div>
<div class="t" style="left:80.25px;width:106.00px;text-align:right;top:577.10px;font-size:16.3px;color:#000;overflow:hidden">2333360544</div>
<div class="t" style="left:193.25px;width:135.00px;top:577.10px;font-size:16.3px;color:#000;overflow:hidden">47-1A-39-M1</div>
<div class="t" style="left:329.25px;width:133.00px;text-align:right;top:577.10px;font-size:16.3px;color:#000;overflow:hidden">1</div>
<div class="t" style="left:469.25px;width:202.50px;top:577.10px;font-size:16.3px;color:#000;overflow:hidden">Продаж</div>
<div class="t" style="left:676.95px;width:123.00px;letter-spacing:0.2px;top:577.10px;font-size:16.3px;color:#000;overflow:hidden">13.08.2025 08:3</div>
<div class="t" style="left:804.45px;width:133.50px;letter-spacing:0.2px;top:577.10px;font-size:16.3px;color:#000;overflow:hidden">15.08.2025 09:32</div>
<div class="t" style="left:1285.25px;width:132.00px;top:577.10px;font-size:16.3px;color:#000;overflow:hidden">tabletki.ua</div>
<div class="t" style="left:1418.25px;width:92.50px;text-align:right;top:577.10px;font-size:16.3px;color:#000;overflow:hidden">1292000</div>
<div class="t" style="left:1514.25px;width:156.00px;text-align:center;top:577.10px;font-size:16.3px;color:#000;overflow:hidden">А</div>
<div class="t" style="left:1675.25px;width:99.00px;top:577.10px;font-size:16.3px;color:#000;overflow:hidden">Отобран</div>
<div class="t" style="left:26.25px;width:50.50px;text-align:right;top:605.60px;font-size:16.3px;color:#000;overflow:hidden">16631</div>
<div class="t" style="left:80.25px;width:106.00px;text-align:right;top:605.60px;font-size:16.3px;color:#000;overflow:hidden">7993957626</div>
<div class="t" style="left:193.25px;width:135.00px;top:605.60px;font-size:16.3px;color:#000;overflow:hidden">61-H4-2T-46</div>
<div class="t" style="left:329.25px;width:133.00px;text-align:right;top:605.60px;font-size:16.3px;color:#000;overflow:hidden">1</div>
<div class="t" style="left:469.25px;width:202.50px;top:605.60px;font-size:16.3px;color:#000;overflow:hidden">Оброблено в аптеці</div>
<div class="t" style="left:676.95px;width:123.00px;letter-spacing:0.2px;top:605.60px;font-size:16.3px;color:#000;overflow:hidden">13.08.2025 08:2</div>
<div class="t" style="left:804.45px;width:133.50px;letter-spacing:0.2px;top:605.60px;font-size:16.3px;color:#000;overflow:hidden">15.08.2025 09:24</div>
<div class="t" style="left:1285.25px;width:132.00px;top:605.60px;font-size:16.3px;color:#000;overflow:hidden">tabletki.ua</div>
<div class="t" style="left:1418.25px;width:92.50px;text-align:right;top:605.60px;font-size:16.3px;color:#000;overflow:hidden">1291995</div>
<div class="t" style="left:1514.25px;width:156.00px;text-align:center;top:605.60px;font-size:16.3px;color:#000;overflow:hidden">П</div>
<div class="t" style="left:1675.25px;width:99.00px;top:605.60px;font-size:16.3px;color:#000;overflow:hidden">Отобран</div>
<div class="t" style="left:26.25px;width:50.50px;text-align:right;top:634.10px;font-size:16.3px;color:#000;overflow:hidden">16630</div>
<div class="t" style="left:80.25px;width:106.00px;text-align:right;top:634.10px;font-size:16.3px;color:#000;overflow:hidden">7570631132</div>
<div class="t" style="left:193.25px;width:135.00px;top:634.10px;font-size:16.3px;color:#000;overflow:hidden">CM-P8-M5-T5</div>
<div class="t" style="left:329.25px;width:133.00px;text-align:right;top:634.10px;font-size:16.3px;color:#000;overflow:hidden">1</div>
<div class="t" style="left:469.25px;width:202.50px;top:634.10px;font-size:16.3px;color:#000;overflow:hidden">Продаж</div>
<div class="t" style="left:676.95px;width:123.00px;letter-spacing:0.2px;top:634.10px;font-size:16.3px;color:#000;overflow:hidden">13.08.2025 08:1</div>
<div class="t" style="left:804.45px;width:133.50px;letter-spacing:0.2px;top:634.10px;font-size:16.3px;color:#000;overflow:hidden">15.08.2025 09:18</div>
<div class="t" style="left:1285.25px;width:132.00px;top:634.10px;font-size:16.3px;color:#000;overflow:hidden">tabletki.ua</div>
<div class="t" style="left:1418.25px;width:92.50px;text-align:right;top:634.10px;font-size:16.3px;color:#000;overflow:hidden">1291994</div>
<div class="t" style="left:1514.25px;width:156.00px;text-align:center;top:634.10px;font-size:16.3px;color:#000;overflow:hidden">А</div>
<div class="t" style="left:1675.25px;width:99.00px;top:634.10px;font-size:16.3px;color:#000;overflow:hidden">Отобран</div>
<div class="t" style="left:26.25px;width:50.50px;text-align:right;top:662.60px;font-size:16.3px;color:#000;overflow:hidden">16629</div>
<div class="t" style="left:80.25px;width:106.00px;text-align:right;top:662.60px;font-size:16.3px;color:#000;overflow:hidden">6467528488</div>
<div class="t" style="left:193.25px;width:135.00px;top:662.60px;font-size:16.3px;color:#000;overflow:hidden">84-11-21-15</div>
<div class="t" style="left:329.25px;width:133.00px;text-align:right;top:662.60px;font-size:16.3px;color:#000;overflow:hidden">1</div>
<div class="t" style="left:469.25px;width:202.50px;top:662.60px;font-size:16.3px;color:#000;overflow:hidden">Оброблено в аптеці</div>
<div class="t" style="left:676.95px;width:123.00px;letter-spacing:0.2px;top:662.60px;font-size:16.3px;color:#000;overflow:hidden">13.08.2025 08:1</div>
<div class="t" style="left:804.45px;width:133.50px;letter-spacing:0.2px;top:662.60px;font-size:16.3px;color:#000;overflow:hidden">15.08.2025 09:14</div>
<div class="t" style="left:1285.25px;width:132.00px;top:662.60px;font-size:16.3px;color:#000;overflow:hidden">tabletki.ua</div>
<div class="t" style="left:1418.25px;width:92.50px;text-align:right;top:662.60px;font-size:16.3px;color:#000;overflow:hidden">1291992</div>
<div class="t" style="left:1514.25px;width:156.00px;text-align:center;top:662.60px;font-size:16.3px;color:#000;overflow:hidden">П</div>
<div class="t" style="left:1675.25px;width:99.00px;top:662.60px;font-size:16.3px;color:#000;overflow:hidden">Отобран</div>
<div class="t" style="left:26.25px;width:50.50px;text-align:right;top:691.10px;font-size:16.3px;color:#000;overflow:hidden">16628</div>
<div class="t" style="left:80.25px;width:106.00px;text-align:right;top:691.10px;font-size:16.3px;color:#000;overflow:hidden">8659771642</div>
<div class="t" style="left:193.25px;width:135.00px;top:691.10px;font-size:16.3px;color:#000;overflow:hidden">22-9B-36-K6</div>
<div class="t" style="left:329.25px;width:133.00px;text-align:right;top:691.10px;font-size:16.3px;color:#000;overflow:hidden">1</div>
<div class="t" style="left:469.25px;width:202.50px;top:691.10px;font-size:16.3px;color:#000;overflow:hidden">Продаж</div>
<div class="t" style="left:676.95px;width:123.00px;letter-spacing:0.2px;top:691.10px;font-size:16.3px;color:#000;overflow:hidden">13.08.2025 08:0</div>
<div class="t" style="left:804.45px;width:133.50px;letter-spacing:0.2px;top:691.10px;font-size:16.3px;color:#000;overflow:hidden">15.08.2025 09:00</div>
<div class="t" style="left:1285.25px;width:132.00px;top:691.10px;font-size:16.3px;color:#000;overflow:hidden">tabletki.ua</div>
<div class="t" style="left:1418.25px;width:92.50px;text-align:right;top:691.10px;font-size:16.3px;color:#000;overflow:hidden">1291987</div>
<div class="t" style="left:1514.25px;width:156.00px;text-align:center;top:691.10px;font-size:16.3px;color:#000;overflow:hidden">А</div>
<div class="t" style="left:1675.25px;width:99.00px;top:691.10px;font-size:16.3px;color:#000;overflow:hidden">Отобран</div>
<div class="t" style="left:26.25px;width:50.50px;text-align:right;top:719.60px;font-size:16.3px;color:#000;overflow:hidden">16627</div>
<div class="t" style="left:80.25px;width:106.00px;text-align:right;top:719.60px;font-size:16.3px;color:#000;overflow:hidden">9459169036</div>
<div class="t" style="left:193.25px;width:135.00px;top:719.60px;font-size:16.3px;color:#000;overflow:hidden">MB-2M-XK-77</div>
<div class="t" style="left:329.25px;width:133.00px;text-align:right;top:719.60px;font-size:16.3px;color:#000;overflow:hidden">1</div>
<div class="t" style="left:469.25px;width:202.50px;top:719.60px;font-size:16.3px;color:#000;overflow:hidden">Продаж</div>
<div class="t" style="left:676.95px;width:123.00px;letter-spacing:0.2px;top:719.60px;font-size:16.3px;color:#000;overflow:hidden">13.08.2025 07:3</div>
<div class="t" style="left:804.45px;width:133.50px;letter-spacing:0.2px;top:719.60px;font-size:16.3px;color:#000;overflow:hidden">15.08.2025 08:36</div>
<div class="t" style="left:1285.25px;width:132.00px;top:719.60px;font-size:16.3px;color:#000;overflow:hidden">tabletki.ua</div>
<div class="t" style="left:1418.25px;width:92.50px;text-align:right;top:719.60px;font-size:16.3px;color:#000;overflow:hidden">1291976</div>
<div class="t" style="left:1514.25px;width:156.00px;text-align:center;top:719.60px;font-size:16.3px;color:#000;overflow:hidden">А</div>
<div class="t" style="left:1675.25px;width:99.00px;top:719.60px;font-size:16.3px;color:#000;overflow:hidden">Отобран</div>
<div class="t" style="left:26.25px;width:50.50px;text-align:right;top:748.10px;font-size:16.3px;color:#000;overflow:hidden">16626</div>
<div class="t" style="left:80.25px;width:106.00px;text-align:right;top:748.10px;font-size:16.3px;color:#000;overflow:hidden">6046813754</div>
<div class="t" style="left:193.25px;width:135.00px;top:748.10px;font-size:16.3px;color:#000;overflow:hidden">H7-HB-C9-H4</div>
<div class="t" style="left:329.25px;width:133.00px;text-align:right;top:748.10px;font-size:16.3px;color:#000;overflow:hidden">1</div>
<div class="t" style="left:469.25px;width:202.50px;top:748.10px;font-size:16.3px;color:#000;overflow:hidden">Продаж</div>
<div class="t" style="left:676.95px;width:123.00px;letter-spacing:0.2px;top:748.10px;font-size:16.3px;color:#000;overflow:hidden">13.08.2025 07:2</div>
<div class="t" style="left:804.45px;width:133.50px;letter-spacing:0.2px;top:748.10px;font-size:16.3px;color:#000;overflow:hidden">15.08.2025 08:22</div>
<div class="t" style="left:1285.25px;width:132.00px;top:748.10px;font-size:16.3px;color:#000;overflow:hidden">tabletki.ua</div>
<div class="t" style="left:1418.25px;width:92.50px;text-align:right;top:748.10px;font-size:16.3px;color:#000;overflow:hidden">1291969</div>
<div class="t" style="left:1514.25px;width:156.00px;text-align:center;top:748.10px;font-size:16.3px;color:#000;overflow:hidden">А</div>
<div class="t" style="left:1675.25px;width:99.00px;top:748.10px;font-size:16.3px;color:#000;overflow:hidden">Отобран</div>
<div class="t" style="left:26.25px;width:50.50px;text-align:right;top:776.60px;font-size:16.3px;color:#000;overflow:hidden">16625</div>
<div class="t" style="left:80.25px;width:106.00px;text-align:right;top:776.60px;font-size:16.3px;color:#000;overflow:hidden">1542312020</div>
<div class="t" style="left:193.25px;width:135.00px;top:776.60px;font-size:16.3px;color:#000;overflow:hidden">01-09-X1-41</div>
<div class="t" style="left:329.25px;width:133.00px;text-align:right;top:776.60px;font-size:16.3px;color:#000;overflow:hidden">1</div>
<div class="t" style="left:469.25px;width:202.50px;top:776.60px;font-size:16.3px;color:#000;overflow:hidden">Оброблено в аптеці</div>
<div class="t" style="left:676.95px;width:123.00px;letter-spacing:0.2px;top:776.60px;font-size:16.3px;color:#000;overflow:hidden">13.08.2025 06:4</div>
<div class="t" style="left:804.45px;width:133.50px;letter-spacing:0.2px;top:776.60px;font-size:16.3px;color:#000;overflow:hidden">15.08.2025 07:46</div>
<div class="t" style="left:1285.25px;width:132.00px;top:776.60px;font-size:16.3px;color:#000;overflow:hidden">tabletki.ua</div>
<div class="t" style="left:1418.25px;width:92.50px;text-align:right;top:776.60px;font-size:16.3px;color:#000;overflow:hidden">1291959</div>
<div class="t" style="left:1514.25px;width:156.00px;text-align:center;top:776.60px;font-size:16.3px;color:#000;overflow:hidden">П</div>
<div class="t" style="left:1675.25px;width:99.00px;top:776.60px;font-size:16.3px;color:#000;overflow:hidden">Отобран</div>
<div class="t" style="left:26.25px;width:50.50px;text-align:right;top:805.10px;font-size:16.3px;color:#000;overflow:hidden">16624</div>
<div class="t" style="left:80.25px;width:106.00px;text-align:right;top:805.10px;font-size:16.3px;color:#000;overflow:hidden">4571698418</div>
<div class="t" style="left:193.25px;width:135.00px;top:805.10px;font-size:16.3px;color:#000;overflow:hidden">T0-62-E8-B3</div>
<div class="t" style="left:329.25px;width:133.00px;text-align:right;top:805.10px;font-size:16.3px;color:#000;overflow:hidden">1</div>
<div class="t" style="left:469.25px;width:202.50px;top:805.10px;font-size:16.3px;color:#000;overflow:hidden">Оброблено в аптеці</div>
<div class="t" style="left:676.95px;width:123.00px;letter-spacing:0.2px;top:805.10px;font-size:16.3px;color:#000;overflow:hidden">13.08.2025 06:4</div>
<div class="t" style="left:804.45px;width:133.50px;letter-spacing:0.2px;top:805.10px;font-size:16.3px;color:#000;overflow:hidden">15.08.2025 07:44</div>
<div class="t" style="left:1285.25px;width:132.00px;top:805.10px;font-size:16.3px;color:#000;overflow:hidden">tabletki.ua</div>
<div class="t" style="left:1418.25px;width:92.50px;text-align:right;top:805.10px;font-size:16.3px;color:#000;overflow:hidden">1291958</div>
<div class="t" style="left:1514.25px;width:156.00px;text-align:center;top:805.10px;font-size:16.3px;color:#000;overflow:hidden">П</div>
<div class="t" style="left:1675.25px;width:99.00px;top:805.10px;font-size:16.3px;color:#000;overflow:hidden">Отобран</div>
<div class="t" style="left:26.25px;width:50.50px;text-align:right;top:833.60px;font-size:16.3px;color:#000;overflow:hidden">16623</div>
<div class="t" style="left:80.25px;width:106.00px;text-align:right;top:833.60px;font-size:16.3px;color:#000;overflow:hidden">8220384166</div>
<div class="t" style="left:193.25px;width:135.00px;top:833.60px;font-size:16.3px;color:#000;overflow:hidden">68-08-P8-86</div>
<div class="t" style="left:329.25px;width:133.00px;text-align:right;top:833.60px;font-size:16.3px;color:#000;overflow:hidden">1</div>
<div class="t" style="left:469.25px;width:202.50px;top:833.60px;font-size:16.3px;color:#000;overflow:hidden">Продаж</div>
<div class="t" style="left:676.95px;width:123.00px;letter-spacing:0.2px;top:833.60px;font-size:16.3px;color:#000;overflow:hidden">12.08.2025 23:2</div>
<div class="t" style="left:804.45px;width:133.50px;letter-spacing:0.2px;top:833.60px;font-size:16.3px;color:#000;overflow:hidden">15.08.2025 00:25</div>
<div class="t" style="left:1285.25px;width:132.00px;top:833.60px;font-size:16.3px;color:#000;overflow:hidden">tabletki.ua</div>
<div class="t" style="left:1418.25px;width:92.50px;text-align:right;top:833.60px;font-size:16.3px;color:#000;overflow:hidden">1291957</div>
<div class="t" style="left:1514.25px;width:156.00px;text-align:center;top:833.60px;font-size:16.3px;color:#000;overflow:hidden">А</div>
<div class="t" style="left:1675.25px;width:99.00px;top:833.60px;font-size:16.3px;color:#000;overflow:hidden">Отобран</div>
<div class="t" style="left:26.25px;width:50.50px;text-align:right;top:862.10px;font-size:16.3px;color:#000;overflow:hidden">16622</div>
<div class="t" style="left:80.25px;width:106.00px;text-align:right;top:862.10px;font-size:16.3px;color:#000;overflow:hidden">1125439532</div>
<div class="t" style="left:193.25px;width:135.00px;top:862.10px;font-size:16.3px;color:#000;overflow:hidden">CM-TX-EB-P0</div>
<div class="t" style="left:329.25px;width:133.00px;text-align:right;top:862.10px;font-size:16.3px;color:#000;overflow:hidden">1</div>
<div class="t" style="left:469.25px;width:202.50px;top:862.10px;font-size:16.3px;color:#000;overflow:hidden">Оброблено в аптеці</div>
<div class="t" style="left:676.95px;width:123.00px;letter-spacing:0.2px;top:862.10px;font-size:16.3px;color:#000;overflow:hidden">12.08.2025 22:5</div>
<div class="t" style="left:804.45px;width:133.50px;letter-spacing:0.2px;top:862.10px;font-size:16.3px;color:#000;overflow:hidden">14.08.2025 23:51</div>
<div class="t" style="left:1285.25px;width:132.00px;top:862.10px;font-size:16.3px;color:#000;overflow:hidden">tabletki.ua</div>
<div class="t" style="left:1418.25px;width:92.50px;text-align:right;top:862.10px;font-size:16.3px;color:#000;overflow:hidden">1291956</div>
<div class="t" style="left:1514.25px;width:156.00px;text-align:center;top:862.10px;font-size:16.3px;color:#000;overflow:hidden">П</div>
<div class="t" style="left:1675.25px;width:99.00px;top:862.10px;font-size:16.3px;color:#000;overflow:hidden">Отобран</div>
<div class="t" style="left:26.25px;width:50.50px;text-align:right;top:890.60px;font-size:16.3px;color:#000;overflow:hidden">16621</div>
<div class="t" style="left:80.25px;width:106.00px;text-align:right;top:890.60px;font-size:16.3px;color:#000;overflow:hidden">6954268356</div>
<div class="t" style="left:193.25px;width:135.00px;top:890.60px;font-size:16.3px;color:#000;overflow:hidden">MP-A3-4E-85</div>
<div class="t" style="left:329.25px;width:133.00px;text-align:right;top:890.60px;font-size:16.3px;color:#000;overflow:hidden">1</div>
<div class="t" style="left:469.25px;width:202.50px;top:890.60px;font-size:16.3px;color:#000;overflow:hidden">Оброблено в аптеці</div>
<div class="t" style="left:676.95px;width:123.00px;letter-spacing:0.2px;top:890.60px;font-size:16.3px;color:#000;overflow:hidden">12.08.2025 20:5</div>
<div class="t" style="left:804.45px;width:133.50px;letter-spacing:0.2px;top:890.60px;font-size:16.3px;color:#000;overflow:hidden">14.08.2025 21:55</div>
<div class="t" style="left:1285.25px;width:132.00px;top:890.60px;font-size:16.3px;color:#000;overflow:hidden">tabletki.ua</div>
<div class="t" style="left:1418.25px;width:92.50px;text-align:right;top:890.60px;font-size:16.3px;color:#000;overflow:hidden">1291955</div>
<div class="t" style="left:1514.25px;width:156.00px;text-align:center;top:890.60px;font-size:16.3px;color:#000;overflow:hidden">П</div>
<div class="t" style="left:1675.25px;width:99.00px;top:890.60px;font-size:16.3px;color:#000;overflow:hidden">Отобран</div>
<div class="t" style="left:26.25px;width:50.50px;text-align:right;top:919.10px;font-size:16.3px;color:#000;overflow:hidden">16620</div>
<div class="t" style="left:80.25px;width:106.00px;text-align:right;top:919.10px;font-size:16.3px;color:#000;overflow:hidden">9303565222</div>
<div class="t" style="left:193.25px;width:135.00px;top:919.10px;font-size:16.3px;color:#000;overflow:hidden">21-E5-77-57</div>
<div class="t" style="left:329.25px;width:133.00px;text-align:right;top:919.10px;font-size:16.3px;color:#000;overflow:hidden">1</div>
<div class="t" style="left:469.25px;width:202.50px;top:919.10px;font-size:16.3px;color:#000;overflow:hidden">Продаж</div>
<div class="t" style="left:676.95px;width:123.00px;letter-spacing:0.2px;top:919.10px;font-size:16.3px;color:#000;overflow:hidden">12.08.2025 20:3</div>
<div class="t" style="left:804.45px;width:133.50px;letter-spacing:0.2px;top:919.10px;font-size:16.3px;color:#000;overflow:hidden">14.08.2025 21:33</div>
<div class="t" style="left:1285.25px;width:132.00px;top:919.10px;font-size:16.3px;color:#000;overflow:hidden">tabletki.ua</div>
<div class="t" style="left:1418.25px;width:92.50px;text-align:right;top:919.10px;font-size:16.3px;color:#000;overflow:hidden">1291948</div>
<div class="t" style="left:1514.25px;width:156.00px;text-align:center;top:919.10px;font-size:16.3px;color:#000;overflow:hidden">А</div>
<div class="t" style="left:1675.25px;width:99.00px;top:919.10px;font-size:16.3px;color:#000;overflow:hidden">Отобран</div>
<div class="t" style="left:26.25px;width:50.50px;text-align:right;top:947.60px;font-size:16.3px;color:#000;overflow:hidden">16619</div>
<div class="t" style="left:80.25px;width:106.00px;text-align:right;top:947.60px;font-size:16.3px;color:#000;overflow:hidden">1149892904</div>
<div class="t" style="left:193.25px;width:135.00px;top:947.60px;font-size:16.3px;color:#000;overflow:hidden">45-CM-6X-P0</div>
<div class="t" style="left:329.25px;width:133.00px;text-align:right;top:947.60px;font-size:16.3px;color:#000;overflow:hidden">1</div>
<div class="t" style="left:469.25px;width:202.50px;top:947.60px;font-size:16.3px;color:#000;overflow:hidden">Продаж</div>
<div class="t" style="left:676.95px;width:123.00px;letter-spacing:0.2px;top:947.60px;font-size:16.3px;color:#000;overflow:hidden">12.08.2025 20:0</div>
<div class="t" style="left:804.45px;width:133.50px;letter-spacing:0.2px;top:947.60px;font-size:16.3px;color:#000;overflow:hidden">14.08.2025 21:05</div>
<div class="t" style="left:1285.25px;width:132.00px;top:947.60px;font-size:16.3px;color:#000;overflow:hidden">tabletki.ua</div>
<div class="t" style="left:1418.25px;width:92.50px;text-align:right;top:947.60px;font-size:16.3px;color:#000;overflow:hidden">1291944</div>
<div class="t" style="left:1514.25px;width:156.00px;text-align:center;top:947.60px;font-size:16.3px;color:#000;overflow:hidden">А</div>
<div class="t" style="left:1675.25px;width:99.00px;top:947.60px;font-size:16.3px;color:#000;overflow:hidden">Отобран</div>
<div class="t" style="left:26.25px;width:50.50px;text-align:right;top:976.10px;font-size:16.3px;color:#000;overflow:hidden">16618</div>
<div class="t" style="left:80.25px;width:106.00px;text-align:right;top:976.10px;font-size:16.3px;color:#000;overflow:hidden">5155177990</div>
<div class="t" style="left:193.25px;width:135.00px;top:976.10px;font-size:16.3px;color:#000;overflow:hidden">AX-4P-XA-04</div>
<div class="t" style="left:329.25px;width:133.00px;text-align:right;top:976.10px;font-size:16.3px;color:#000;overflow:hidden">2</div>
<div class="t" style="left:469.25px;width:202.50px;top:976.10px;font-size:16.3px;color:#000;overflow:hidden">Скасування</div>
<div class="t" style="left:676.95px;width:123.00px;letter-spacing:0.2px;top:976.10px;font-size:16.3px;color:#000;overflow:hidden">12.08.2025 20:0</div>
<div class="t" style="left:804.45px;width:133.50px;letter-spacing:0.2px;top:976.10px;font-size:16.3px;color:#000;overflow:hidden">14.08.2025 21:01</div>
<div class="t" style="left:1091.75px;width:189.00px;top:976.10px;font-size:16.3px;color:#000;overflow:hidden">Замовлення було скасов</div>
<div class="t" style="left:1285.25px;width:132.00px;top:976.10px;font-size:16.3px;color:#000;overflow:hidden">tabletki.ua</div>
<div class="t" style="left:1418.25px;width:92.50px;text-align:right;top:976.10px;font-size:16.3px;color:#000;overflow:hidden">1291942</div>
<div class="t" style="left:26.25px;width:50.50px;text-align:right;top:1004.60px;font-size:16.3px;color:#000;overflow:hidden">16617</div>
<div class="t" style="left:80.25px;width:106.00px;text-align:right;top:1004.60px;font-size:16.3px;color:#000;overflow:hidden">2811797874</div>
<div class="t" style="left:193.25px;width:135.00px;top:1004.60px;font-size:16.3px;color:#000;overflow:hidden">HE-HH-ET-32</div>
<div class="t" style="left:329.25px;width:133.00px;text-align:right;top:1004.60px;font-size:16.3px;color:#000;overflow:hidden">1</div>
<div class="t" style="left:469.25px;width:202.50px;top:1004.60px;font-size:16.3px;color:#000;overflow:hidden">Продаж</div>
<div class="t" style="left:676.95px;width:123.00px;letter-spacing:0.2px;top:1004.60px;font-size:16.3px;color:#000;overflow:hidden">12.08.2025 19:5</div>
<div class="t" style="left:804.45px;width:133.50px;letter-spacing:0.2px;top:1004.60px;font-size:16.3px;color:#000;overflow:hidden">14.08.2025 20:53</div>
<div class="t" style="left:1285.25px;width:132.00px;top:1004.60px;font-size:16.3px;color:#000;overflow:hidden">tabletki.ua</div>
<div class="t" style="left:1418.25px;width:92.50px;text-align:right;top:1004.60px;font-size:16.3px;color:#000;overflow:hidden">1291934</div>
<div class="t" style="left:1514.25px;width:156.00px;text-align:center;top:1004.60px;font-size:16.3px;color:#000;overflow:hidden">А</div>
<div class="t" style="left:1675.25px;width:99.00px;top:1004.60px;font-size:16.3px;color:#000;overflow:hidden">Отобран</div>
<div class="t" style="left:26.25px;width:50.50px;text-align:right;top:1033.10px;font-size:16.3px;color:#000;overflow:hidden">16616</div>
<div class="t" style="left:80.25px;width:106.00px;text-align:right;top:1033.10px;font-size:16.3px;color:#000;overflow:hidden">5044252576</div>
<div class="t" style="left:193.25px;width:135.00px;top:1033.10px;font-size:16.3px;color:#000;overflow:hidden">M8-BB-6M-T3</div>
<div class="t" style="left:329.25px;width:133.00px;text-align:right;top:1033.10px;font-size:16.3px;color:#000;overflow:hidden">1</div>
<div class="t" style="left:469.25px;width:202.50px;top:1033.10px;font-size:16.3px;color:#000;overflow:hidden">Продаж</div>
<div class="t" style="left:676.95px;width:123.00px;letter-spacing:0.2px;top:1033.10px;font-size:16.3px;color:#000;overflow:hidden">12.08.2025 18:1</div>
<div class="t" style="left:804.45px;width:133.50px;letter-spacing:0.2px;top:1033.10px;font-size:16.3px;color:#000;overflow:hidden">14.08.2025 19:15</div>
<div class="t" style="left:1285.25px;width:132.00px;top:1033.10px;font-size:16.3px;color:#000;overflow:hidden">tabletki.ua</div>
<div class="t" style="left:1418.25px;width:92.50px;text-align:right;top:1033.10px;font-size:16.3px;color:#000;overflow:hidden">1291908</div>
<div class="t" style="left:1514.25px;width:156.00px;text-align:center;top:1033.10px;font-size:16.3px;color:#000;overflow:hidden">А</div>
<div class="t" style="left:1675.25px;width:99.00px;top:1033.10px;font-size:16.3px;color:#000;overflow:hidden">Отобран</div>
<div class="t" style="left:26.25px;width:50.50px;text-align:right;top:1061.60px;font-size:16.3px;color:#000;overflow:hidden">16615</div>
<div class="t" style="left:80.25px;width:106.00px;text-align:right;top:1061.60px;font-size:16.3px;color:#000;overflow:hidden">5206327580</div>
<div class="t" style="left:193.25px;width:135.00px;top:1061.60px;font-size:16.3px;color:#000;overflow:hidden">0X-TA-X6-14</div>
<div class="t" style="left:329.25px;width:133.00px;text-align:right;top:1061.60px;font-size:16.3px;color:#000;overflow:hidden">1</div>
<div class="t" style="left:469.25px;width:202.50px;top:1061.60px;font-size:16.3px;color:#000;overflow:hidden">Продаж</div>
<div class="t" style="left:676.95px;width:123.00px;letter-spacing:0.2px;top:1061.60px;font-size:16.3px;color:#000;overflow:hidden">12.08.2025 18:0</div>
<div class="t" style="left:804.45px;width:133.50px;letter-spacing:0.2px;top:1061.60px;font-size:16.3px;color:#000;overflow:hidden">14.08.2025 19:03</div>
<div class="t" style="left:1285.25px;width:132.00px;top:1061.60px;font-size:16.3px;color:#000;overflow:hidden">tabletki.ua</div>
<div class="t" style="left:1418.25px;width:92.50px;text-align:right;top:1061.60px;font-size:16.3px;color:#000;overflow:hidden">1291899</div>
<div class="t" style="left:1514.25px;width:156.00px;text-align:center;top:1061.60px;font-size:16.3px;color:#000;overflow:hidden">А</div>
<div class="t" style="left:1675.25px;width:99.00px;top:1061.60px;font-size:16.3px;color:#000;overflow:hidden">Отобран</div>
<div class="t" style="left:26.25px;width:50.50px;text-align:right;top:1090.10px;font-size:16.3px;color:#000;overflow:hidden">16614</div>
<div class="t" style="left:80.25px;width:106.00px;text-align:right;top:1090.10px;font-size:16.3px;color:#000;overflow:hidden">9335179316</div>
<div class="t" style="left:193.25px;width:135.00px;top:1090.10px;font-size:16.3px;color:#000;overflow:hidden">M5-8P-4P-57</div>
<div class="t" style="left:329.25px;width:133.00px;text-align:right;top:1090.10px;font-size:16.3px;color:#000;overflow:hidden">2</div>
<div class="t" style="left:469.25px;width:202.50px;top:1090.10px;font-size:16.3px;color:#000;overflow:hidden">Продаж</div>
<div class="t" style="left:676.95px;width:123.00px;letter-spacing:0.2px;top:1090.10px;font-size:16.3px;color:#000;overflow:hidden">12.08.2025 15:5</div>
<div class="t" style="left:804.45px;width:133.50px;letter-spacing:0.2px;top:1090.10px;font-size:16.3px;color:#000;overflow:hidden">14.08.2025 16:57</div>
<div class="t" style="left:1285.25px;width:132.00px;top:1090.10px;font-size:16.3px;color:#000;overflow:hidden">tabletki.ua</div>
<div class="t" style="left:1418.25px;width:92.50px;text-align:right;top:1090.10px;font-size:16.3px;color:#000;overflow:hidden">1291840</div>
<div class="t" style="left:1514.25px;width:156.00px;text-align:center;top:1090.10px;font-size:16.3px;color:#000;overflow:hidden">А</div>
<div class="t" style="left:1675.25px;width:99.00px;top:1090.10px;font-size:16.3px;color:#000;overflow:hidden">Отобран</div>
<div class="t" style="left:26.25px;width:50.50px;text-align:right;top:1118.60px;font-size:16.3px;color:#000;overflow:hidden">16613</div>
<div class="t" style="left:80.25px;width:106.00px;text-align:right;top:1118.60px;font-size:16.3px;color:#000;overflow:hidden">8151727518</div>
<div class="t" style="left:193.25px;width:135.00px;top:1118.60px;font-size:16.3px;color:#000;overflow:hidden">TK-T5-87-76</div>
<div class="t" style="left:329.25px;width:133.00px;text-align:right;top:1118.60px;font-size:16.3px;color:#000;overflow:hidden">1</div>
<div class="t" style="left:469.25px;width:202.50px;top:1118.60px;font-size:16.3px;color:#000;overflow:hidden">Продаж</div>
<div class="t" style="left:676.95px;width:123.00px;letter-spacing:0.2px;top:1118.60px;font-size:16.3px;color:#000;overflow:hidden">12.08.2025 15:2</div>
<div class="t" style="left:804.45px;width:133.50px;letter-spacing:0.2px;top:1118.60px;font-size:16.3px;color:#000;overflow:hidden">14.08.2025 16:29</div>
<div class="t" style="left:1285.25px;width:132.00px;top:1118.60px;font-size:16.3px;color:#000;overflow:hidden">tabletki.ua</div>
<div class="t" style="left:1418.25px;width:92.50px;text-align:right;top:1118.60px;font-size:16.3px;color:#000;overflow:hidden">1291836</div>
<div class="t" style="left:1514.25px;width:156.00px;text-align:center;top:1118.60px;font-size:16.3px;color:#000;overflow:hidden">А</div>
<div class="t" style="left:1675.25px;width:99.00px;top:1118.60px;font-size:16.3px;color:#000;overflow:hidden">Отобран</div>
<div class="t" style="left:26.25px;width:50.50px;text-align:right;top:1147.10px;font-size:16.3px;color:#000;overflow:hidden">16612</div>
<div class="t" style="left:80.25px;width:106.00px;text-align:right;top:1147.10px;font-size:16.3px;color:#000;overflow:hidden">9445042622</div>
<div class="t" style="left:193.25px;width:135.00px;top:1147.10px;font-size:16.3px;color:#000;overflow:hidden">2B-6A-BB-77</div>
<div class="t" style="left:329.25px;width:133.00px;text-align:right;top:1147.10px;font-size:16.3px;color:#000;overflow:hidden">1</div>
<div class="t" style="left:469.25px;width:202.50px;top:1147.10px;font-size:16.3px;color:#000;overflow:hidden">Скасування</div>
<div class="t" style="left:676.95px;width:123.00px;letter-spacing:0.2px;top:1147.10px;font-size:16.3px;color:#000;overflow:hidden">12.08.2025 15:0</div>
<div class="t" style="left:804.45px;width:133.50px;letter-spacing:0.2px;top:1147.10px;font-size:16.3px;color:#000;overflow:hidden">14.08.2025 16:09</div>
<div class="t" style="left:1091.75px;width:189.00px;top:1147.10px;font-size:16.3px;color:#000;overflow:hidden">Замовлення було скасов</div>
<div class="t" style="left:1285.25px;width:132.00px;top:1147.10px;font-size:16.3px;color:#000;overflow:hidden">tabletki.ua</div>
<div class="t" style="left:1418.25px;width:92.50px;text-align:right;top:1147.10px;font-size:16.3px;color:#000;overflow:hidden">1291826</div>
<div class="t" style="left:26.25px;width:50.50px;text-align:right;top:1175.60px;font-size:16.3px;color:#000;overflow:hidden">16611</div>
<div class="t" style="left:80.25px;width:106.00px;text-align:right;top:1175.60px;font-size:16.3px;color:#000;overflow:hidden">8713925980</div>
<div class="t" style="left:193.25px;width:135.00px;top:1175.60px;font-size:16.3px;color:#000;overflow:hidden">0X-H0-23-M6</div>
<div class="t" style="left:329.25px;width:133.00px;text-align:right;top:1175.60px;font-size:16.3px;color:#000;overflow:hidden">1</div>
<div class="t" style="left:469.25px;width:202.50px;top:1175.60px;font-size:16.3px;color:#000;overflow:hidden">Продаж</div>
<div class="t" style="left:676.95px;width:123.00px;letter-spacing:0.2px;top:1175.60px;font-size:16.3px;color:#000;overflow:hidden">12.08.2025 15:0</div>
<div class="t" style="left:804.45px;width:133.50px;letter-spacing:0.2px;top:1175.60px;font-size:16.3px;color:#000;overflow:hidden">14.08.2025 16:03</div>
<div class="t" style="left:1285.25px;width:132.00px;top:1175.60px;font-size:16.3px;color:#000;overflow:hidden">tabletki.ua</div>
<div class="t" style="left:1418.25px;width:92.50px;text-align:right;top:1175.60px;font-size:16.3px;color:#000;overflow:hidden">1291825</div>
<div class="t" style="left:1514.25px;width:156.00px;text-align:center;top:1175.60px;font-size:16.3px;color:#000;overflow:hidden">А</div>
<div class="t" style="left:1675.25px;width:99.00px;top:1175.60px;font-size:16.3px;color:#000;overflow:hidden">Отобран</div>
<div class="t" style="left:26.25px;width:50.50px;text-align:right;top:1204.10px;font-size:16.3px;color:#000;overflow:hidden">16610</div>
<div class="t" style="left:80.25px;width:106.00px;text-align:right;top:1204.10px;font-size:16.3px;color:#000;overflow:hidden">3063830416</div>
<div class="t" style="left:193.25px;width:135.00px;top:1204.10px;font-size:16.3px;color:#000;overflow:hidden">M0-MT-8P-72</div>
<div class="t" style="left:329.25px;width:133.00px;text-align:right;top:1204.10px;font-size:16.3px;color:#000;overflow:hidden">1</div>
<div class="t" style="left:469.25px;width:202.50px;top:1204.10px;font-size:16.3px;color:#000;overflow:hidden">Продаж</div>
<div class="t" style="left:676.95px;width:123.00px;letter-spacing:0.2px;top:1204.10px;font-size:16.3px;color:#000;overflow:hidden">12.08.2025 14:5</div>
<div class="t" style="left:804.45px;width:133.50px;letter-spacing:0.2px;top:1204.10px;font-size:16.3px;color:#000;overflow:hidden">14.08.2025 15:59</div>
<div class="t" style="left:1285.25px;width:132.00px;top:1204.10px;font-size:16.3px;color:#000;overflow:hidden">tabletki.ua</div>
<div class="t" style="left:1418.25px;width:92.50px;text-align:right;top:1204.10px;font-size:16.3px;color:#000;overflow:hidden">1291824</div>
<div class="t" style="left:1514.25px;width:156.00px;text-align:center;top:1204.10px;font-size:16.3px;color:#000;overflow:hidden">А</div>
<div class="t" style="left:1675.25px;width:99.00px;top:1204.10px;font-size:16.3px;color:#000;overflow:hidden">Отобран</div>
<div class="t" style="left:26.25px;width:50.50px;text-align:right;top:1232.60px;font-size:16.3px;color:#000;overflow:hidden">16609</div>
<div class="t" style="left:80.25px;width:106.00px;text-align:right;top:1232.60px;font-size:16.3px;color:#000;overflow:hidden">3149838054</div>
<div class="t" style="left:193.25px;width:135.00px;top:1232.60px;font-size:16.3px;color:#000;overflow:hidden">H2-K9-64-92</div>
<div class="t" style="left:329.25px;width:133.00px;text-align:right;top:1232.60px;font-size:16.3px;color:#000;overflow:hidden">1</div>
<div class="t" style="left:469.25px;width:202.50px;top:1232.60px;font-size:16.3px;color:#000;overflow:hidden">Продаж</div>
<div class="t" style="left:676.95px;width:123.00px;letter-spacing:0.2px;top:1232.60px;font-size:16.3px;color:#000;overflow:hidden">12.08.2025 14:4</div>
<div class="t" style="left:804.45px;width:133.50px;letter-spacing:0.2px;top:1232.60px;font-size:16.3px;color:#000;overflow:hidden">14.08.2025 15:41</div>
<div class="t" style="left:1285.25px;width:132.00px;top:1232.60px;font-size:16.3px;color:#000;overflow:hidden">tabletki.ua</div>
<div class="t" style="left:1418.25px;width:92.50px;text-align:right;top:1232.60px;font-size:16.3px;color:#000;overflow:hidden">1291813</div>
<div class="t" style="left:1514.25px;width:156.00px;text-align:center;top:1232.60px;font-size:16.3px;color:#000;overflow:hidden">А</div>
<div class="t" style="left:1675.25px;width:99.00px;top:1232.60px;font-size:16.3px;color:#000;overflow:hidden">Отобран</div>
</div></div>
<div class="b" style="left:2133px;top:201px;width:24px;height:1043px;background:#f0f0f0"></div>
<div class="b" style="left:2133px;top:226.5px;width:22px;height:162px;background:#cdcdcd"></div>
<svg style="left:0;top:0" width="2162" height="1317"><path d="M2139 215.2L2144.3 210.1L2149.2 215.2L2149.2 218.8L2144.3 214L2139 218.8Z" fill="#606060"/><path d="M2139 1227.1L2144.3 1232.2L2149.2 1227.1L2149.2 1231L2144.3 1236.3L2139 1231Z" fill="#606060"/></svg>
<div class="b" style="left:9px;top:1244px;width:158.5px;height:31px;background:#fff"></div>
<div class="b" style="left:167.5px;top:1244.5px;width:1990px;height:28px;background:#f0f0f0"></div>
<svg style="left:0;top:0" width="2162" height="1317"><rect x="11.25" y="1246.65" width="22.1" height="23.3" fill="#cccccc" stroke="#c2c2c2" stroke-width="1.5"/><rect x="15.3" y="1254" width="1.6" height="11" fill="#f6f6f6"/><path d="M23.5 1254L18 1259.5L23.5 1265z" fill="#e6e6e6"/><path d="M29.5 1254L24 1259.5L29.5 1265z" fill="#e6e6e6"/><rect x="117.75" y="1246.65" width="22.1" height="23.3" fill="#e1e1e1" stroke="#adadad" stroke-width="1.5"/><path d="M121.4 1253L127.3 1258.3L121.4 1263.6z" fill="#111"/><path d="M127.3 1253L133.2 1258.3L127.3 1263.6z" fill="#111"/><rect x="133.2" y="1253" width="1.9" height="10.6" fill="#111"/><rect x="144.95" y="1246.65" width="22.1" height="23.3" fill="#e1e1e1" stroke="#adadad" stroke-width="1.5"/><path d="M149.7 1254.5a1.5 1.5 0 0 1 1.5-1.5h8.3a1.5 1.5 0 0 1 1.5 1.5v2.6l-3.2 2.2v4.3h-4.9v-4.3l-3.2-2.2z" fill="#f07810"/><rect x="151.5" y="1254.6" width="7.8" height="1" fill="#ffd8b0"/><path d="M261 1252.7L252 1258.2L261 1263.8L261 1261.3L256 1258.2L261 1255.1z" fill="#c4c4c4"/><path d="M2113 1252.7L2122 1258.2L2113 1263.8L2113 1261.3L2118 1258.2L2113 1255.1z" fill="#c4c4c4"/></svg>
<div class="t" style="left:45.3px;top:1251.00px;font-size:16.3px;color:#000;transform:scaleX(0.9785);transform-origin:0 0;">1 из 215</div>
<svg style="left:0;top:0" width="2162" height="1317"><rect x="8.35" y="1282.35" width="185.9" height="33.2" fill="#f0f0f0" stroke="#1a1a1a" stroke-width="1.9"/><rect x="198.85" y="1282.35" width="186" height="33.2" fill="#fdd3a6" stroke="#1e80dc" stroke-width="1.7"/></svg>
<div class="t" style="left:12.3px;top:1290.76px;font-size:16px;color:#000;transform:scaleX(1.0068);transform-origin:0 0;">Головна</div>
<div class="t" style="left:201.5px;top:1290.76px;font-size:16px;color:#000;transform:scaleX(1.0453);transform-origin:0 0;">Замовлення від поку ...</div>
<svg style="left:0;top:0" width="2162" height="1317"><rect x="727.25" y="248.05" width="515.8" height="289.0" fill="#f1f1f1" stroke="#a0a0a0" stroke-width="1.5"/></svg>
<div class="t" style="left:776.2px;top:259.12px;font-size:18.4px;color:#6d6d6d;transform:scaleX(0.9541);transform-origin:0 0;">Додати</div>
<div class="t" style="left:1185.2px;top:259.12px;font-size:18.4px;color:#6d6d6d;transform:scaleX(0.9367);transform-origin:0 0;">Ins</div>
<svg style="left:736px;top:257px" width="22" height="22"><path d="M8 0.5h5v7.5h8v5h-8v8h-5v-8h-7.5v-5h7.5z" fill="#b4e4ac" stroke="#8ccc84" stroke-width="1"/></svg>
<div class="t" style="left:776.2px;top:292.12px;font-size:18.4px;color:#000;font-weight:bold;transform:scaleX(0.9318);transform-origin:0 0;">Редагувати</div>
<div class="t" style="left:1188.6000000000001px;top:292.12px;font-size:18.4px;color:#000;font-weight:bold;transform:scaleX(0.9110);transform-origin:0 0;">F4</div>
<svg style="left:734px;top:288.5px" width="26" height="26"><path d="M1.5 24.5l2.5-7.5L18 3l5 5L9 22z" fill="#f2d030" stroke="#a88a20" stroke-width="1"/><path d="M18 3l2-2a1.5 1.5 0 0 1 2 0l3 3a1.5 1.5 0 0 1 0 2l-2 2z" fill="#e86060"/><path d="M17 4l5 5" stroke="#c8c8c8" stroke-width="1.5"/><path d="M1.5 24.5l2.5-7.5 5 5z" fill="#f4c8a8"/><path d="M1.5 24.5l1.2-3.6 2.4 2.4z" fill="#333"/></svg>
<div class="t" style="left:776.2px;top:325.12px;font-size:18.4px;color:#6d6d6d;transform:scaleX(0.9579);transform-origin:0 0;">Видалити рядок</div>
<div class="t" style="left:1181.9px;top:325.12px;font-size:18.4px;color:#6d6d6d;transform:scaleX(0.9531);transform-origin:0 0;">Del</div>
<svg style="left:736px;top:322px" width="23" height="23"><path d="M3.5 3.5l15 15M18.5 3.5l-15 15" stroke="#f4b4a8" stroke-width="4.5" stroke-linecap="round"/></svg>
<div class="t" style="left:776.2px;top:367.32px;font-size:18.4px;color:#000;transform:scaleX(0.9651);transform-origin:0 0;">Скасувати замовлення</div>
<svg style="left:736px;top:365px" width="22" height="22"><circle cx="11" cy="11" r="8.8" fill="#fde8e0" stroke="#e8502e" stroke-width="3.6"/><path d="M5.5 16.5L16.5 5.5" stroke="#e8502e" stroke-width="3.6"/></svg>
<div class="t" style="left:776.2px;top:408.82px;font-size:18.4px;color:#000;transform:scaleX(0.9790);transform-origin:0 0;">Відкрийте чек</div>
<svg style="left:735px;top:407.5px;opacity:1" width="23" height="20"><rect x="0.75" y="0.75" width="21.5" height="18.5" rx="1.2" fill="#fff" stroke="#6f93cc" stroke-width="1.5"/><rect x="1.2" y="1.2" width="20.6" height="3.2" fill="#9ab8e6"/><rect x="3.0" y="6.5" width="4.8" height="1.6" fill="#b4b8c0"/><rect x="3.0" y="9.5" width="4.8" height="1.6" fill="#b4b8c0"/><rect x="3.0" y="12.5" width="4.8" height="1.6" fill="#b4b8c0"/><rect x="3.0" y="15.5" width="4.8" height="1.6" fill="#b4b8c0"/><rect x="9.2" y="6.5" width="4.8" height="1.6" fill="#b4b8c0"/><rect x="9.2" y="9.5" width="4.8" height="1.6" fill="#b4b8c0"/><rect x="9.2" y="12.5" width="4.8" height="1.6" fill="#b4b8c0"/><rect x="9.2" y="15.5" width="4.8" height="1.6" fill="#b4b8c0"/><rect x="15.4" y="6.5" width="4.8" height="1.6" fill="#b4b8c0"/><rect x="15.4" y="9.5" width="4.8" height="1.6" fill="#b4b8c0"/><rect x="15.4" y="12.5" width="4.8" height="1.6" fill="#b4b8c0"/><rect x="15.4" y="15.5" width="4.8" height="1.6" fill="#b4b8c0"/></svg>
<div class="t" style="left:776.2px;top:441.82px;font-size:18.4px;color:#000;transform:scaleX(0.9691);transform-origin:0 0;">Відкрити відкладений чек</div>
<svg style="left:735px;top:440.5px;opacity:1" width="23" height="20"><rect x="0.75" y="0.75" width="21.5" height="18.5" rx="1.2" fill="#fff" stroke="#6f93cc" stroke-width="1.5"/><rect x="1.2" y="1.2" width="20.6" height="3.2" fill="#9ab8e6"/><rect x="3.0" y="6.5" width="4.8" height="1.6" fill="#b4b8c0"/><rect x="3.0" y="9.5" width="4.8" height="1.6" fill="#b4b8c0"/><rect x="3.0" y="12.5" width="4.8" height="1.6" fill="#b4b8c0"/><rect x="3.0" y="15.5" width="4.8" height="1.6" fill="#b4b8c0"/><rect x="9.2" y="6.5" width="4.8" height="1.6" fill="#b4b8c0"/><rect x="9.2" y="9.5" width="4.8" height="1.6" fill="#b4b8c0"/><rect x="9.2" y="12.5" width="4.8" height="1.6" fill="#b4b8c0"/><rect x="9.2" y="15.5" width="4.8" height="1.6" fill="#b4b8c0"/><rect x="15.4" y="6.5" width="4.8" height="1.6" fill="#b4b8c0"/><rect x="15.4" y="9.5" width="4.8" height="1.6" fill="#b4b8c0"/><rect x="15.4" y="12.5" width="4.8" height="1.6" fill="#b4b8c0"/><rect x="15.4" y="15.5" width="4.8" height="1.6" fill="#b4b8c0"/></svg>
<div class="t" style="left:776.2px;top:475.12px;font-size:18.4px;color:#6d6d6d;transform:scaleX(0.9660);transform-origin:0 0;">Відкрийте замовлення для постачальника</div>
<svg style="left:735px;top:474px;opacity:0.4" width="23" height="20"><rect x="0.75" y="0.75" width="21.5" height="18.5" rx="1.2" fill="#fff" stroke="#6f93cc" stroke-width="1.5"/><rect x="1.2" y="1.2" width="20.6" height="3.2" fill="#9ab8e6"/><rect x="3.0" y="6.5" width="4.8" height="1.6" fill="#b4b8c0"/><rect x="3.0" y="9.5" width="4.8" height="1.6" fill="#b4b8c0"/><rect x="3.0" y="12.5" width="4.8" height="1.6" fill="#b4b8c0"/><rect x="3.0" y="15.5" width="4.8" height="1.6" fill="#b4b8c0"/><rect x="9.2" y="6.5" width="4.8" height="1.6" fill="#b4b8c0"/><rect x="9.2" y="9.5" width="4.8" height="1.6" fill="#b4b8c0"/><rect x="9.2" y="12.5" width="4.8" height="1.6" fill="#b4b8c0"/><rect x="9.2" y="15.5" width="4.8" height="1.6" fill="#b4b8c0"/><rect x="15.4" y="6.5" width="4.8" height="1.6" fill="#b4b8c0"/><rect x="15.4" y="9.5" width="4.8" height="1.6" fill="#b4b8c0"/><rect x="15.4" y="12.5" width="4.8" height="1.6" fill="#b4b8c0"/><rect x="15.4" y="15.5" width="4.8" height="1.6" fill="#b4b8c0"/></svg>
<div class="t" style="left:776.2px;top:508.12px;font-size:18.4px;color:#6d6d6d;transform:scaleX(0.9830);transform-origin:0 0;">Відкрийте комбіноване замовлення постачальнику</div>
<svg style="left:735px;top:507px;opacity:0.4" width="23" height="20"><rect x="0.75" y="0.75" width="21.5" height="18.5" rx="1.2" fill="#fff" stroke="#6f93cc" stroke-width="1.5"/><rect x="1.2" y="1.2" width="20.6" height="3.2" fill="#9ab8e6"/><rect x="3.0" y="6.5" width="4.8" height="1.6" fill="#b4b8c0"/><rect x="3.0" y="9.5" width="4.8" height="1.6" fill="#b4b8c0"/><rect x="3.0" y="12.5" width="4.8" height="1.6" fill="#b4b8c0"/><rect x="3.0" y="15.5" width="4.8" height="1.6" fill="#b4b8c0"/><rect x="9.2" y="6.5" width="4.8" height="1.6" fill="#b4b8c0"/><rect x="9.2" y="9.5" width="4.8" height="1.6" fill="#b4b8c0"/><rect x="9.2" y="12.5" width="4.8" height="1.6" fill="#b4b8c0"/><rect x="9.2" y="15.5" width="4.8" height="1.6" fill="#b4b8c0"/><rect x="15.4" y="6.5" width="4.8" height="1.6" fill="#b4b8c0"/><rect x="15.4" y="9.5" width="4.8" height="1.6" fill="#b4b8c0"/><rect x="15.4" y="12.5" width="4.8" height="1.6" fill="#b4b8c0"/><rect x="15.4" y="15.5" width="4.8" height="1.6" fill="#b4b8c0"/></svg>
<div class="b" style="left:774px;top:353.5px;width:466px;height:1.5px;background:#d4d4d4"></div>
<div class="b" style="left:774px;top:395.5px;width:466px;height:1.5px;background:#d4d4d4"></div>
<svg style="left:0;top:0" width="2162" height="1317"><rect x="729.9" y="433.9" width="1311" height="34.2" fill="none"/></svg>
<div class="b" style="left:728px;top:432px;width:516px;height:38.2px;border:4.2px solid #ff0000;border-radius:1px"></div>
<svg style="left:0;top:0" width="2162" height="1317"><path d="M556 256.3 L557.2 256 L719 435.5 L715 439 Z" fill="#ff0000"/><path d="M728.5 447 L711.5 441 L722.5 430 Z" fill="#ff0000"/></svg>
</body></html>
